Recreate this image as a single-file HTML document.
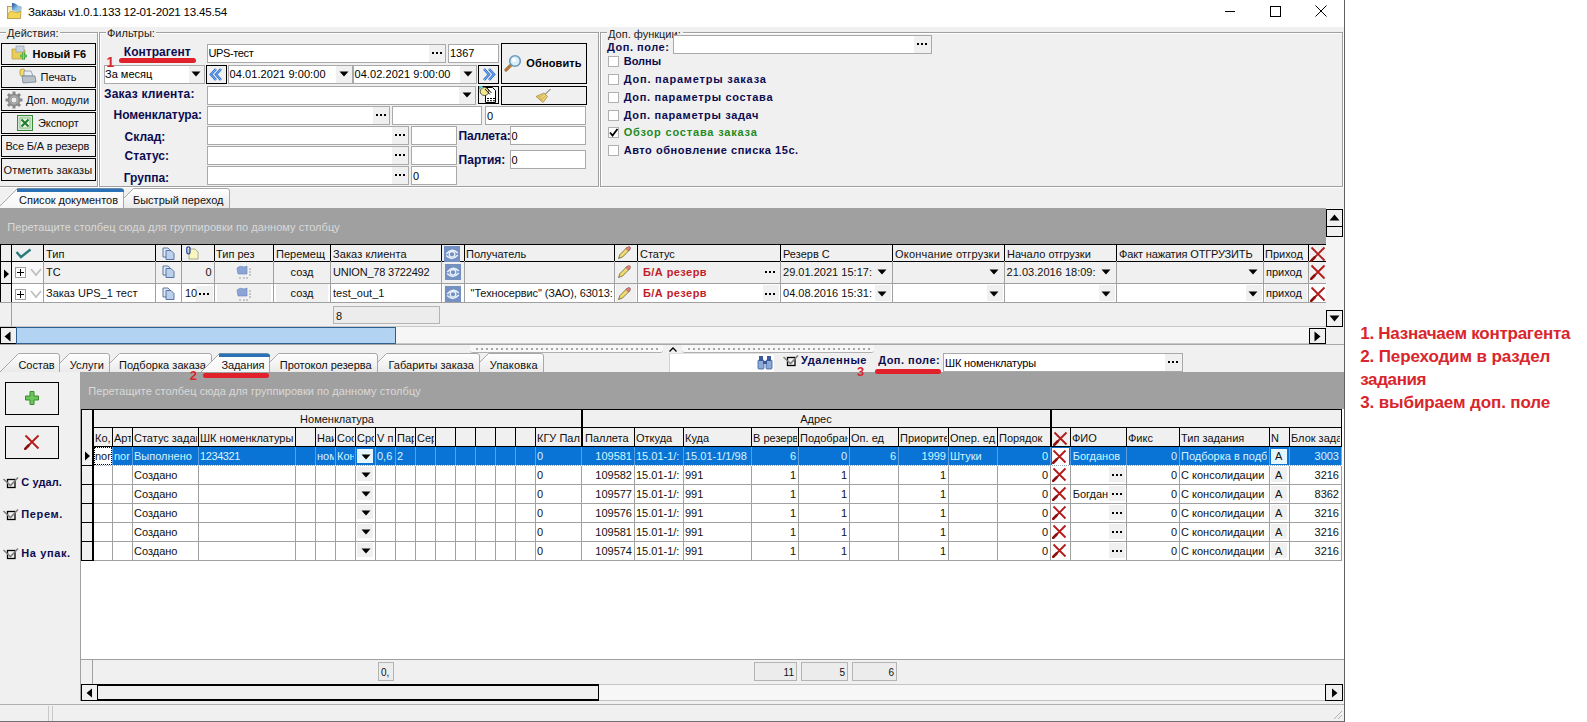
<!DOCTYPE html>
<html><head><meta charset="utf-8"><title>Заказы</title>
<style>html,body{margin:0;padding:0;}body{width:1587px;height:722px;position:relative;overflow:hidden;background:#fff;font-family:"Liberation Sans",sans-serif;}</style>
</head><body>
<div style="position:absolute;left:0px;top:0px;width:1344px;height:27px;background:#fff"></div>
<svg style="position:absolute;left:0px;top:0px;" width="26" height="22" viewBox="0 0 26 22">
      <defs><linearGradient id="ti1" x1="0" y1="0" x2="1" y2="1"><stop offset="0" stop-color="#1f4f8f"/><stop offset="0.5" stop-color="#8ec0f0"/><stop offset="1" stop-color="#c8d8a0"/></linearGradient></defs>
      <rect x="7.5" y="6.5" width="13" height="12" fill="#f8eab8" stroke="#a89050" stroke-width="0.8"/>
      <path d="M12 3 L15 3.5 L18 5.5 L22 7 L21.5 10 L19 13 L12 10 Z" fill="url(#ti1)"/>
      <path d="M7.5 18.5 L8.5 13 Q11 10 14 12 Q18 14 21 11 L20.5 18.5 Z" fill="#f2d655" stroke="#b09040" stroke-width="0.6"/>
    </svg>
<div style="position:absolute;left:28px;top:6px;font:400 11.6px/11.6px 'Liberation Sans', sans-serif;color:#000;white-space:pre;letter-spacing:-0.216px;">Заказы v1.0.1.133 12-01-2021 13.45.54</div>
<div style="position:absolute;left:1225px;top:11px;width:10px;height:1px;background:#000"></div>
<div style="position:absolute;left:1270px;top:6px;width:11px;height:11px;border:1px solid #000;box-sizing:border-box"></div>
<svg style="position:absolute;left:1315px;top:5px;" width="12" height="12" viewBox="0 0 12 12"><path d="M0.5 0.5 L11.5 11.5 M11.5 0.5 L0.5 11.5" stroke="#000" stroke-width="1"/></svg>
<div style="position:absolute;left:0px;top:27px;width:1344px;height:695px;background:#f0f0f0"></div>
<div style="position:absolute;left:1344px;top:0px;width:1px;height:722px;background:#606060"></div>
<div style="position:absolute;left:-1px;top:33px;width:100px;height:155px;border:1px solid #fff;box-sizing:border-box"></div>
<div style="position:absolute;left:-2px;top:32px;width:100px;height:155px;border:1px solid #a0a0a0;box-sizing:border-box"></div>
<div style="position:absolute;left:100px;top:33px;width:500px;height:155px;border:1px solid #fff;box-sizing:border-box"></div>
<div style="position:absolute;left:99px;top:32px;width:500px;height:155px;border:1px solid #a0a0a0;box-sizing:border-box"></div>
<div style="position:absolute;left:601px;top:33px;width:743px;height:155px;border:1px solid #fff;box-sizing:border-box"></div>
<div style="position:absolute;left:600px;top:32px;width:743px;height:155px;border:1px solid #a0a0a0;box-sizing:border-box"></div>
<div style="position:absolute;left:6px;top:28px;width:54px;height:10px;background:#f0f0f0"></div>
<div style="position:absolute;left:7px;top:28px;font:400 11px/11px 'Liberation Sans', sans-serif;color:#222;white-space:pre;letter-spacing:0.037px;">Действия:</div>
<div style="position:absolute;left:106px;top:28px;width:50px;height:10px;background:#f0f0f0"></div>
<div style="position:absolute;left:107px;top:28px;font:400 11px/11px 'Liberation Sans', sans-serif;color:#222;white-space:pre;">Фильтры:</div>
<div style="position:absolute;left:607px;top:28px;width:76px;height:10px;background:#f0f0f0"></div>
<div style="position:absolute;left:608px;top:29px;font:400 11px/11px 'Liberation Sans', sans-serif;color:#222;white-space:pre;">Доп. функции:</div>
<div style="position:absolute;left:1px;top:43px;width:95px;height:22px;border:1px solid #000;box-sizing:border-box;background:#f0f0f0;"></div>
<div style="position:absolute;left:1px;top:66px;width:95px;height:22px;border:1px solid #000;box-sizing:border-box;background:#f0f0f0;"></div>
<div style="position:absolute;left:1px;top:89px;width:95px;height:22px;border:1px solid #000;box-sizing:border-box;background:#f0f0f0;"></div>
<div style="position:absolute;left:1px;top:112px;width:95px;height:22px;border:1px solid #000;box-sizing:border-box;background:#f0f0f0;"></div>
<div style="position:absolute;left:1px;top:135px;width:95px;height:22px;border:1px solid #000;box-sizing:border-box;background:#f0f0f0;"></div>
<div style="position:absolute;left:1px;top:158px;width:95px;height:23px;border:1px solid #000;box-sizing:border-box;background:#f0f0f0;"></div>
<div style="position:absolute;left:32.5px;top:48.5px;font:700 11px/11px 'Liberation Sans', sans-serif;color:#000;white-space:pre;letter-spacing:0.027px;">Новый F6</div>
<div style="position:absolute;left:40.5px;top:71.7px;font:400 11px/11px 'Liberation Sans', sans-serif;color:#111;white-space:pre;letter-spacing:-0.008px;">Печать</div>
<div style="position:absolute;left:26px;top:95px;font:400 11px/11px 'Liberation Sans', sans-serif;color:#111;white-space:pre;letter-spacing:-0.041px;">Доп. модули</div>
<div style="position:absolute;left:38px;top:118px;font:400 11px/11px 'Liberation Sans', sans-serif;color:#111;white-space:pre;letter-spacing:-0.106px;">Экспорт</div>
<div style="position:absolute;left:5.4px;top:141px;font:400 11px/11px 'Liberation Sans', sans-serif;color:#111;white-space:pre;letter-spacing:-0.174px;">Все Б/А в резерв</div>
<div style="position:absolute;left:3.6px;top:164.5px;font:400 11px/11px 'Liberation Sans', sans-serif;color:#111;white-space:pre;letter-spacing:0.108px;">Отметить заказы</div>
<svg style="position:absolute;left:11px;top:45px;" width="17" height="17" viewBox="0 0 17 17">
      <path d="M1 4 L6 4 L7 5 L14 5 L14 14 L1 14 Z" fill="#e9cd5a" stroke="#b39a3a" stroke-width="0.7"/>
      <rect x="5" y="1" width="8" height="6" fill="#c9d4de" stroke="#8a9aaa" stroke-width="0.6"/>
      <path d="M9 11 h7 M12.5 7.5 v7" stroke="#2f9a2f" stroke-width="2.6"/>
      <path d="M9 11 h7 M12.5 7.5 v7" stroke="#7fdc6f" stroke-width="1.2"/>
    </svg>
<svg style="position:absolute;left:19px;top:68px;" width="18" height="17" viewBox="0 0 18 17">
      <rect x="1" y="1" width="5" height="7" rx="2" fill="#f2de6a" stroke="#a08a2a" stroke-width="0.7"/>
      <path d="M5 3 L12 3 L14 8 L5 8 Z" fill="#e8eef4" stroke="#7a8a9a" stroke-width="0.7"/>
      <path d="M3 8 L16 8 L17 14 L4 15 Z" fill="#b8c0c8" stroke="#6a7a8a" stroke-width="0.7"/>
    </svg>
<svg style="position:absolute;left:5px;top:91px;" width="18" height="18" viewBox="0 0 18 18">
      <defs><radialGradient id="gr1"><stop offset="0.4" stop-color="#c8c8c8"/><stop offset="1" stop-color="#7a7a7a"/></radialGradient></defs>
      <rect x="7.5" y="0.5" width="3" height="4" fill="#8a8a8a" transform="rotate(0 9 9)"/><rect x="7.5" y="0.5" width="3" height="4" fill="#8a8a8a" transform="rotate(45 9 9)"/><rect x="7.5" y="0.5" width="3" height="4" fill="#8a8a8a" transform="rotate(90 9 9)"/><rect x="7.5" y="0.5" width="3" height="4" fill="#8a8a8a" transform="rotate(135 9 9)"/><rect x="7.5" y="0.5" width="3" height="4" fill="#8a8a8a" transform="rotate(180 9 9)"/><rect x="7.5" y="0.5" width="3" height="4" fill="#8a8a8a" transform="rotate(225 9 9)"/><rect x="7.5" y="0.5" width="3" height="4" fill="#8a8a8a" transform="rotate(270 9 9)"/><rect x="7.5" y="0.5" width="3" height="4" fill="#8a8a8a" transform="rotate(315 9 9)"/>
      <circle cx="9" cy="9" r="6.3" fill="url(#gr1)"/>
      <circle cx="9" cy="9" r="3" fill="#ececec" stroke="#8a8a8a" stroke-width="0.8"/>
    </svg>
<svg style="position:absolute;left:17px;top:115px;" width="16" height="16" viewBox="0 0 16 16">
      <rect x="0.5" y="0.5" width="15" height="15" fill="#cfe8cf" stroke="#3a8a3a" stroke-width="1"/>
      <rect x="3" y="3" width="10" height="10" fill="#e6f4e6" stroke="#5aa05a" stroke-width="0.6"/>
      <path d="M4.5 4.5 L11.5 11.5 M11.5 4.5 L4.5 11.5" stroke="#1f7a2a" stroke-width="2"/>
    </svg>
<div style="position:absolute;left:123.8px;top:46px;font:700 12px/12px 'Liberation Sans', sans-serif;color:#0c0c50;white-space:pre;letter-spacing:0.041px;">Контрагент</div>
<div style="position:absolute;left:119px;top:58px;width:77px;height:5px;background:#e0202a;border-radius:3px"></div>
<div style="position:absolute;left:106.5px;top:54.5px;font:700 14px/14px 'Liberation Sans', sans-serif;color:#d8282c;white-space:pre;z-index:5;">1</div>
<div style="position:absolute;left:207px;top:44px;width:239px;height:19px;border:1px solid #a9a9a9;box-sizing:border-box;background:#fff"></div>
<div style="position:absolute;left:208.5px;top:48px;font:400 11px/11px 'Liberation Sans', sans-serif;color:#000;white-space:pre;letter-spacing:-0.382px;">UPS-тест</div>
<div style="position:absolute;left:429px;top:45px;width:16px;height:17px;background:#f0f0f0"></div>
<div style="position:absolute;left:432px;top:52px;width:2px;height:2px;background:#000"></div>
<div style="position:absolute;left:436px;top:52px;width:2px;height:2px;background:#000"></div>
<div style="position:absolute;left:440px;top:52px;width:2px;height:2px;background:#000"></div>
<div style="position:absolute;left:448px;top:44px;width:51px;height:19px;border:1px solid #a9a9a9;box-sizing:border-box;background:#fff"></div>
<div style="position:absolute;left:450px;top:48px;font:400 11px/11px 'Liberation Sans', sans-serif;color:#000;white-space:pre;">1367</div>
<div style="position:absolute;left:104px;top:65px;width:101px;height:19px;border:1px solid #a9a9a9;box-sizing:border-box;background:#fff"></div>
<div style="position:absolute;left:105px;top:69px;font:400 11px/11px 'Liberation Sans', sans-serif;color:#000;white-space:pre;">За месяц</div>
<div style="position:absolute;left:189px;top:66px;width:15px;height:17px;background:#f0f0f0"></div>
<svg style="position:absolute;left:191px;top:71px;" width="10" height="6" viewBox="0 0 10 6"><path d="M0.5 0.5 L9.5 0.5 L5 5.5 Z" fill="#000"/></svg>
<div style="position:absolute;left:206px;top:65px;width:21px;height:19px;border:1px solid #000;box-sizing:border-box;background:#f0f0f0;"></div>
<svg style="position:absolute;left:209px;top:67px;" width="15" height="15" viewBox="0 0 15 15"><path d="M7 2 L2 7.5 L7 13 M12 2 L7 7.5 L12 13" fill="none" stroke="#2d6fd0" stroke-width="2.6"/><path d="M7 2 L2 7.5 L7 13 M12 2 L7 7.5 L12 13" fill="none" stroke="#8ec0f8" stroke-width="0.9"/></svg>
<div style="position:absolute;left:228px;top:65px;width:125px;height:19px;border:1px solid #a9a9a9;box-sizing:border-box;background:#fff"></div>
<div style="position:absolute;left:229.6px;top:69px;font:400 11px/11px 'Liberation Sans', sans-serif;color:#000;white-space:pre;letter-spacing:0.066px;">04.01.2021 9:00:00</div>
<div style="position:absolute;left:336px;top:66px;width:16px;height:17px;background:#f0f0f0"></div>
<svg style="position:absolute;left:339px;top:71px;" width="10" height="6" viewBox="0 0 10 6"><path d="M0.5 0.5 L9.5 0.5 L5 5.5 Z" fill="#000"/></svg>
<div style="position:absolute;left:353px;top:65px;width:124px;height:19px;border:1px solid #a9a9a9;box-sizing:border-box;background:#fff"></div>
<div style="position:absolute;left:354.5px;top:69px;font:400 11px/11px 'Liberation Sans', sans-serif;color:#000;white-space:pre;letter-spacing:0.066px;">04.02.2021 9:00:00</div>
<div style="position:absolute;left:460px;top:66px;width:16px;height:17px;background:#f0f0f0"></div>
<svg style="position:absolute;left:463px;top:71px;" width="10" height="6" viewBox="0 0 10 6"><path d="M0.5 0.5 L9.5 0.5 L5 5.5 Z" fill="#000"/></svg>
<div style="position:absolute;left:478px;top:65px;width:21px;height:19px;border:1px solid #000;box-sizing:border-box;background:#f0f0f0;"></div>
<svg style="position:absolute;left:481px;top:67px;" width="15" height="15" viewBox="0 0 15 15"><path d="M3 2 L8 7.5 L3 13 M8 2 L13 7.5 L8 13" fill="none" stroke="#2d6fd0" stroke-width="2.6"/><path d="M3 2 L8 7.5 L3 13 M8 2 L13 7.5 L8 13" fill="none" stroke="#8ec0f8" stroke-width="0.9"/></svg>
<div style="position:absolute;left:501px;top:43px;width:86px;height:41px;border:1px solid #000;box-sizing:border-box;background:#f0f0f0;"></div>
<svg style="position:absolute;left:503px;top:54px;" width="20" height="19" viewBox="0 0 20 19">
      <path d="M3 16 L8 11" stroke="#b07840" stroke-width="3.2" stroke-linecap="round"/>
      <circle cx="12" cy="7" r="5.3" fill="#d8eef8" stroke="#6a9ab8" stroke-width="1.6"/>
      <circle cx="11" cy="6" r="2" fill="#fff"/>
    </svg>
<div style="position:absolute;left:526.3px;top:58px;font:700 11px/11px 'Liberation Sans', sans-serif;color:#000;white-space:pre;letter-spacing:0.126px;">Обновить</div>
<div style="position:absolute;left:104px;top:88px;font:700 12px/12px 'Liberation Sans', sans-serif;color:#0c0c50;white-space:pre;letter-spacing:0.190px;">Заказ клиента:</div>
<div style="position:absolute;left:207px;top:86px;width:269px;height:19px;border:1px solid #a9a9a9;box-sizing:border-box;background:#fff"></div>
<div style="position:absolute;left:459px;top:87px;width:16px;height:17px;background:#f0f0f0"></div>
<svg style="position:absolute;left:462px;top:92px;" width="10" height="6" viewBox="0 0 10 6"><path d="M0.5 0.5 L9.5 0.5 L5 5.5 Z" fill="#000"/></svg>
<div style="position:absolute;left:478px;top:86px;width:21px;height:18px;border:1px solid #000;box-sizing:border-box;background:#f0f0f0;"></div>
<svg style="position:absolute;left:478px;top:85px;" width="21" height="19" viewBox="0 0 21 19">
      <path d="M1 1 L5 1 L1 5 Z" fill="#40c8c8"/>
      <path d="M7.5 2.5 L14.5 2.5 L17.5 5.5 L17.5 17.5 L7.5 17.5 Z" fill="#fff" stroke="#000" stroke-width="1"/>
      <path d="M9 13.5 h8 M9 15.8 h8" stroke="#000" stroke-width="1.1" stroke-dasharray="2 1"/>
      <ellipse cx="6.5" cy="6.5" rx="4.3" ry="4" fill="#f4e88a" stroke="#333" stroke-width="0.8"/>
      <path d="M7 4 L12 9.5 M9 3 L13.5 8" stroke="#000" stroke-width="0.9"/>
    </svg>
<div style="position:absolute;left:501px;top:86px;width:86px;height:19px;border:1px solid #000;box-sizing:border-box;background:#f0f0f0;"></div>
<svg style="position:absolute;left:535px;top:88px;" width="17" height="16" viewBox="0 0 17 16">
      <path d="M15.5 1 L10 6.5" stroke="#5a5a5a" stroke-width="1"/>
      <path d="M9 5 L12.5 8.5 L8 14.5 L1 8.5 Z" fill="#ecd27a" stroke="#a08030" stroke-width="0.7"/>
      <path d="M4 9.5 L8.5 6.5 M6 11.5 L10.5 8 M3 8 L7.5 13" stroke="#b89a40" stroke-width="0.6"/>
    </svg>
<div style="position:absolute;left:113.6px;top:109px;font:700 12px/12px 'Liberation Sans', sans-serif;color:#0c0c50;white-space:pre;letter-spacing:-0.106px;">Номенклатура:</div>
<div style="position:absolute;left:207px;top:106px;width:183px;height:19px;border:1px solid #a9a9a9;box-sizing:border-box;background:#fff"></div>
<div style="position:absolute;left:373px;top:107px;width:16px;height:17px;background:#f0f0f0"></div>
<div style="position:absolute;left:376px;top:114px;width:2px;height:2px;background:#000"></div>
<div style="position:absolute;left:380px;top:114px;width:2px;height:2px;background:#000"></div>
<div style="position:absolute;left:384px;top:114px;width:2px;height:2px;background:#000"></div>
<div style="position:absolute;left:392px;top:106px;width:90px;height:19px;border:1px solid #a9a9a9;box-sizing:border-box;background:#fff"></div>
<div style="position:absolute;left:485px;top:106px;width:101px;height:19px;border:1px solid #a9a9a9;box-sizing:border-box;background:#fff"></div>
<div style="position:absolute;left:487px;top:110.5px;font:400 11px/11px 'Liberation Sans', sans-serif;color:#000;white-space:pre;">0</div>
<div style="position:absolute;left:124.6px;top:131px;font:700 12px/12px 'Liberation Sans', sans-serif;color:#0c0c50;white-space:pre;">Склад:</div>
<div style="position:absolute;left:207px;top:126px;width:202px;height:19px;border:1px solid #a9a9a9;box-sizing:border-box;background:#fff"></div>
<div style="position:absolute;left:392px;top:127px;width:16px;height:17px;background:#f0f0f0"></div>
<div style="position:absolute;left:395px;top:134px;width:2px;height:2px;background:#000"></div>
<div style="position:absolute;left:399px;top:134px;width:2px;height:2px;background:#000"></div>
<div style="position:absolute;left:403px;top:134px;width:2px;height:2px;background:#000"></div>
<div style="position:absolute;left:411px;top:126px;width:46px;height:19px;border:1px solid #a9a9a9;box-sizing:border-box;background:#fff"></div>
<div style="position:absolute;left:124.6px;top:150px;font:700 12px/12px 'Liberation Sans', sans-serif;color:#0c0c50;white-space:pre;">Статус:</div>
<div style="position:absolute;left:207px;top:146px;width:202px;height:19px;border:1px solid #a9a9a9;box-sizing:border-box;background:#fff"></div>
<div style="position:absolute;left:392px;top:147px;width:16px;height:17px;background:#f0f0f0"></div>
<div style="position:absolute;left:395px;top:154px;width:2px;height:2px;background:#000"></div>
<div style="position:absolute;left:399px;top:154px;width:2px;height:2px;background:#000"></div>
<div style="position:absolute;left:403px;top:154px;width:2px;height:2px;background:#000"></div>
<div style="position:absolute;left:411px;top:146px;width:46px;height:19px;border:1px solid #a9a9a9;box-sizing:border-box;background:#fff"></div>
<div style="position:absolute;left:123.7px;top:172px;font:700 12px/12px 'Liberation Sans', sans-serif;color:#0c0c50;white-space:pre;">Группа:</div>
<div style="position:absolute;left:207px;top:166px;width:202px;height:19px;border:1px solid #a9a9a9;box-sizing:border-box;background:#fff"></div>
<div style="position:absolute;left:392px;top:167px;width:16px;height:17px;background:#f0f0f0"></div>
<div style="position:absolute;left:395px;top:174px;width:2px;height:2px;background:#000"></div>
<div style="position:absolute;left:399px;top:174px;width:2px;height:2px;background:#000"></div>
<div style="position:absolute;left:403px;top:174px;width:2px;height:2px;background:#000"></div>
<div style="position:absolute;left:411px;top:166px;width:46px;height:19px;border:1px solid #a9a9a9;box-sizing:border-box;background:#fff"></div>
<div style="position:absolute;left:413px;top:171px;font:400 11px/11px 'Liberation Sans', sans-serif;color:#000;white-space:pre;">0</div>
<div style="position:absolute;left:458.6px;top:130px;font:700 12px/12px 'Liberation Sans', sans-serif;color:#0c0c50;white-space:pre;letter-spacing:-0.182px;">Паллета:</div>
<div style="position:absolute;left:510px;top:126px;width:76px;height:19px;border:1px solid #a9a9a9;box-sizing:border-box;background:#fff"></div>
<div style="position:absolute;left:511.5px;top:131px;font:400 11px/11px 'Liberation Sans', sans-serif;color:#000;white-space:pre;">0</div>
<div style="position:absolute;left:458.6px;top:153.6px;font:700 12px/12px 'Liberation Sans', sans-serif;color:#0c0c50;white-space:pre;">Партия:</div>
<div style="position:absolute;left:510px;top:150px;width:76px;height:19px;border:1px solid #a9a9a9;box-sizing:border-box;background:#fff"></div>
<div style="position:absolute;left:511.5px;top:155px;font:400 11px/11px 'Liberation Sans', sans-serif;color:#000;white-space:pre;">0</div>
<div style="position:absolute;left:607px;top:41.8px;font:700 11px/11px 'Liberation Sans', sans-serif;color:#0c0c50;white-space:pre;letter-spacing:0.523px;">Доп. поле:</div>
<div style="position:absolute;left:673px;top:35px;width:259px;height:19px;border:1px solid #a9a9a9;box-sizing:border-box;background:#fff"></div>
<div style="position:absolute;left:914px;top:36px;width:17px;height:17px;background:#f0f0f0"></div>
<div style="position:absolute;left:917px;top:43px;width:2px;height:2px;background:#000"></div>
<div style="position:absolute;left:921px;top:43px;width:2px;height:2px;background:#000"></div>
<div style="position:absolute;left:925px;top:43px;width:2px;height:2px;background:#000"></div>
<div style="position:absolute;left:608px;top:56px;width:11px;height:11px;border:1px solid #b0b0b0;box-sizing:border-box;background:#fff"></div>
<div style="position:absolute;left:623.7px;top:55.7px;font:700 11px/11px 'Liberation Sans', sans-serif;color:#0c0c50;white-space:pre;letter-spacing:0.016px;">Волны</div>
<div style="position:absolute;left:608px;top:74px;width:11px;height:11px;border:1px solid #b0b0b0;box-sizing:border-box;background:#fff"></div>
<div style="position:absolute;left:623.7px;top:73.5px;font:700 11px/11px 'Liberation Sans', sans-serif;color:#0c0c50;white-space:pre;letter-spacing:0.792px;">Доп. параметры заказа</div>
<div style="position:absolute;left:608px;top:92px;width:11px;height:11px;border:1px solid #b0b0b0;box-sizing:border-box;background:#fff"></div>
<div style="position:absolute;left:623.7px;top:91.5px;font:700 11px/11px 'Liberation Sans', sans-serif;color:#0c0c50;white-space:pre;letter-spacing:0.670px;">Доп. параметры состава</div>
<div style="position:absolute;left:608px;top:110px;width:11px;height:11px;border:1px solid #b0b0b0;box-sizing:border-box;background:#fff"></div>
<div style="position:absolute;left:623.7px;top:109.5px;font:700 11px/11px 'Liberation Sans', sans-serif;color:#0c0c50;white-space:pre;letter-spacing:0.651px;">Доп. параметры задач</div>
<div style="position:absolute;left:608px;top:127px;width:11px;height:11px;border:1px solid #b0b0b0;box-sizing:border-box;background:#fff"></div>
<svg style="position:absolute;left:608px;top:127px;" width="11" height="11" viewBox="0 0 11 11"><path d="M2 5.5 L4.5 8.5 L9.5 2" fill="none" stroke="#000" stroke-width="1.8"/></svg>
<div style="position:absolute;left:623.7px;top:127px;font:700 11px/11px 'Liberation Sans', sans-serif;color:#1f8a1f;white-space:pre;letter-spacing:0.818px;">Обзор состава заказа</div>
<div style="position:absolute;left:608px;top:145px;width:11px;height:11px;border:1px solid #b0b0b0;box-sizing:border-box;background:#fff"></div>
<div style="position:absolute;left:623.7px;top:145px;font:700 11px/11px 'Liberation Sans', sans-serif;color:#0c0c50;white-space:pre;letter-spacing:0.543px;">Авто обновление списка 15с.</div>
<svg style="position:absolute;left:113px;top:188px;" width="117" height="21" viewBox="0 0 117 21"><defs>
      <linearGradient id="tgI133" x1="0" y1="0" x2="0" y2="1"><stop offset="0" stop-color="#ffffff"/><stop offset="1" stop-color="#e9e9e9"/></linearGradient></defs>
      <path d="M0.5 20.5 L20.5 0.5 L114 0.5 Q116.5 0.5 116.5 3 L116.5 20.5 Z" fill="url(#tgI133)" stroke="none"/>
      <path d="M0.5 20.5 L20.5 0.5 L114 0.5 Q116.5 0.5 116.5 3 L116.5 20.5" fill="none" stroke="#a8a8a8" stroke-width="1"/></svg>
<div style="position:absolute;left:133px;top:195px;font:400 11px/11px 'Liberation Sans', sans-serif;color:#111;white-space:pre;letter-spacing:-0.009px;">Быстрый переход</div>
<svg style="position:absolute;left:-3px;top:188px;" width="127" height="21" viewBox="0 0 127 21"><defs>
      <linearGradient id="tgA17" x1="0" y1="0" x2="0" y2="1"><stop offset="0" stop-color="#ffffff"/><stop offset="1" stop-color="#f6f6f6"/></linearGradient></defs>
      <path d="M0.5 20.5 L20.5 0.5 L124 0.5 Q126.5 0.5 126.5 3 L126.5 20.5 Z" fill="url(#tgA17)" stroke="none"/>
      <path d="M0.5 20.5 L20.5 0.5 L124 0.5 Q126.5 0.5 126.5 3 L126.5 20.5" fill="none" stroke="#a8a8a8" stroke-width="1"/></svg>
<svg style="position:absolute;left:17px;top:188px;" width="107" height="4" viewBox="0 0 107 4"><path d="M0 4 L0 0.5 L104 0.5 Q107 0.5 107 3 L107 4 Z" fill="#2a72b5"/></svg>
<div style="position:absolute;left:19px;top:195px;font:400 11px/11px 'Liberation Sans', sans-serif;color:#111;white-space:pre;letter-spacing:-0.008px;">Список документов</div>
<div style="position:absolute;left:0px;top:208px;width:1326px;height:37px;background:#a0a0a0"></div>
<div style="position:absolute;left:7.3px;top:221.7px;font:400 11px/11px 'Liberation Sans', sans-serif;color:#d9d9d9;white-space:pre;letter-spacing:0.040px;">Перетащите столбец сюда для группировки по данному столбцу</div>
<div style="position:absolute;left:0px;top:244px;width:1326px;height:17px;background:#f0f0f0"></div>
<div style="position:absolute;left:0px;top:261px;width:1326px;height:22px;background:#f0f0f0"></div>
<div style="position:absolute;left:12px;top:283px;width:1314px;height:19px;background:#fff"></div>
<div style="position:absolute;left:0px;top:283px;width:11px;height:19px;background:#f0f0f0"></div>
<div style="position:absolute;left:12px;top:262px;width:31px;height:21px;background:#f8f8f8"></div>
<div style="position:absolute;left:196px;top:286px;width:17px;height:16px;background:#f0f0f0"></div>
<div style="position:absolute;left:217px;top:284px;width:54px;height:18px;background:#f0f0f0"></div>
<div style="position:absolute;left:276px;top:284px;width:52px;height:18px;background:#f0f0f0"></div>
<div style="position:absolute;left:444px;top:284px;width:17px;height:18px;background:#f0f0f0"></div>
<div style="position:absolute;left:616px;top:284px;width:20px;height:18px;background:#f0f0f0"></div>
<div style="position:absolute;left:763px;top:285px;width:16px;height:16px;background:#f0f0f0"></div>
<div style="position:absolute;left:875px;top:285px;width:16px;height:16px;background:#f0f0f0"></div>
<div style="position:absolute;left:987px;top:285px;width:16px;height:16px;background:#f0f0f0"></div>
<div style="position:absolute;left:1099px;top:285px;width:16px;height:16px;background:#f0f0f0"></div>
<div style="position:absolute;left:1246px;top:285px;width:16px;height:16px;background:#f0f0f0"></div>
<div style="position:absolute;left:1265px;top:284px;width:42px;height:18px;background:#f0f0f0"></div>
<div style="position:absolute;left:0px;top:244px;width:1326px;height:1px;background:#000"></div>
<div style="position:absolute;left:0px;top:261px;width:1326px;height:1px;background:#000"></div>
<div style="position:absolute;left:0px;top:244px;width:1px;height:17px;background:#000"></div>
<div style="position:absolute;left:11px;top:244px;width:1px;height:17px;background:#000"></div>
<div style="position:absolute;left:43px;top:244px;width:1px;height:17px;background:#000"></div>
<div style="position:absolute;left:155px;top:244px;width:1px;height:17px;background:#000"></div>
<div style="position:absolute;left:181px;top:244px;width:1px;height:17px;background:#000"></div>
<div style="position:absolute;left:214px;top:244px;width:1px;height:17px;background:#000"></div>
<div style="position:absolute;left:273px;top:244px;width:1px;height:17px;background:#000"></div>
<div style="position:absolute;left:330px;top:244px;width:1px;height:17px;background:#000"></div>
<div style="position:absolute;left:441px;top:244px;width:1px;height:17px;background:#000"></div>
<div style="position:absolute;left:464px;top:244px;width:1px;height:17px;background:#000"></div>
<div style="position:absolute;left:614px;top:244px;width:1px;height:17px;background:#000"></div>
<div style="position:absolute;left:637px;top:244px;width:1px;height:17px;background:#000"></div>
<div style="position:absolute;left:780px;top:244px;width:1px;height:17px;background:#000"></div>
<div style="position:absolute;left:892px;top:244px;width:1px;height:17px;background:#000"></div>
<div style="position:absolute;left:1004px;top:244px;width:1px;height:17px;background:#000"></div>
<div style="position:absolute;left:1116px;top:244px;width:1px;height:17px;background:#000"></div>
<div style="position:absolute;left:1263px;top:244px;width:1px;height:17px;background:#000"></div>
<div style="position:absolute;left:1308px;top:244px;width:1px;height:17px;background:#000"></div>
<div style="position:absolute;left:12px;top:283px;width:1314px;height:1px;background:#a0a0a0"></div>
<div style="position:absolute;left:12px;top:302px;width:1314px;height:1px;background:#a0a0a0"></div>
<div style="position:absolute;left:0px;top:283px;width:12px;height:1px;background:#000"></div>
<div style="position:absolute;left:0px;top:302px;width:12px;height:1px;background:#a0a0a0"></div>
<div style="position:absolute;left:43px;top:261px;width:1px;height:42px;background:#a0a0a0"></div>
<div style="position:absolute;left:155px;top:261px;width:1px;height:42px;background:#a0a0a0"></div>
<div style="position:absolute;left:181px;top:261px;width:1px;height:42px;background:#a0a0a0"></div>
<div style="position:absolute;left:214px;top:261px;width:1px;height:42px;background:#a0a0a0"></div>
<div style="position:absolute;left:273px;top:261px;width:1px;height:42px;background:#a0a0a0"></div>
<div style="position:absolute;left:330px;top:261px;width:1px;height:42px;background:#a0a0a0"></div>
<div style="position:absolute;left:441px;top:261px;width:1px;height:42px;background:#a0a0a0"></div>
<div style="position:absolute;left:464px;top:261px;width:1px;height:42px;background:#a0a0a0"></div>
<div style="position:absolute;left:614px;top:261px;width:1px;height:42px;background:#a0a0a0"></div>
<div style="position:absolute;left:637px;top:261px;width:1px;height:42px;background:#a0a0a0"></div>
<div style="position:absolute;left:780px;top:261px;width:1px;height:42px;background:#a0a0a0"></div>
<div style="position:absolute;left:892px;top:261px;width:1px;height:42px;background:#a0a0a0"></div>
<div style="position:absolute;left:1004px;top:261px;width:1px;height:42px;background:#a0a0a0"></div>
<div style="position:absolute;left:1116px;top:261px;width:1px;height:42px;background:#a0a0a0"></div>
<div style="position:absolute;left:1263px;top:261px;width:1px;height:42px;background:#a0a0a0"></div>
<div style="position:absolute;left:1308px;top:261px;width:1px;height:42px;background:#a0a0a0"></div>
<div style="position:absolute;left:0px;top:261px;width:1px;height:41px;background:#000"></div>
<div style="position:absolute;left:11px;top:261px;width:1px;height:41px;background:#000"></div>
<svg style="position:absolute;left:15px;top:248px;" width="17" height="11" viewBox="0 0 17 11"><path d="M1.5 4 L6 9 L15.5 1.5" fill="none" stroke="#2a7a7a" stroke-width="2.4"/></svg>
<div style="position:absolute;left:46px;top:249px;font:400 11px/11px 'Liberation Sans', sans-serif;color:#111;white-space:pre;">Тип</div>
<svg style="position:absolute;left:162px;top:247px;" width="13" height="13" viewBox="0 0 13 13">
      <path d="M1 1 L6 1 L8 3 L8 10 L1 10 Z" fill="#dfe8f4" stroke="#4a6a9a" stroke-width="0.9"/>
      <path d="M4 3.5 L9 3.5 L12 6.5 L12 12.5 L4 12.5 Z" fill="#bcd0ec" stroke="#4a6a9a" stroke-width="0.9"/></svg>
<svg style="position:absolute;left:186px;top:246px;" width="13" height="14" viewBox="0 0 13 14">
      <path d="M3 3 L9 3 L12 6 L12 13 L3 13 Z" fill="#fbf6c0" stroke="#9a9a7a" stroke-width="0.8"/>
      <rect x="0.8" y="0.8" width="3.2" height="7" rx="1.6" fill="none" stroke="#2a4aa0" stroke-width="1.3"/></svg>
<div style="position:absolute;left:216px;top:249px;font:400 11px/11px 'Liberation Sans', sans-serif;color:#111;white-space:pre;">Тип рез</div>
<div style="position:absolute;left:276px;top:249px;font:400 11px/11px 'Liberation Sans', sans-serif;color:#111;white-space:pre;">Перемещ</div>
<div style="position:absolute;left:333px;top:249px;font:400 11px/11px 'Liberation Sans', sans-serif;color:#111;white-space:pre;letter-spacing:0.081px;">Заказ клиента</div>
<svg style="position:absolute;left:444px;top:246px;" width="16" height="16" viewBox="0 0 16 16">
      <rect x="0" y="0" width="16" height="16" fill="#7491c2"/>
      <path d="M2.2 8 Q8 1 13.8 7" fill="none" stroke="#eaf2fc" stroke-width="1.5"/>
      <path d="M13.8 9 Q8 15.5 2.2 9.5" fill="none" stroke="#eaf2fc" stroke-width="1.5"/>
      <circle cx="8" cy="8.3" r="2.8" fill="none" stroke="#eaf2fc" stroke-width="1.3"/></svg>
<div style="position:absolute;left:466px;top:249px;font:400 11px/11px 'Liberation Sans', sans-serif;color:#111;white-space:pre;">Получатель</div>
<svg style="position:absolute;left:617px;top:246px;" width="14" height="14" viewBox="0 0 14 14">
      <path d="M1.5 12.5 L3 8.5 L10 1.5 L12.5 4 L5.5 11 Z" fill="#f0dc70" stroke="#6a5a2a" stroke-width="0.8"/>
      <path d="M9 2.5 L10.5 1 Q12 0 13 1 Q14 2 13 3.5 L11.5 5 Z" fill="#e08080" stroke="#8a4040" stroke-width="0.6"/></svg>
<div style="position:absolute;left:640px;top:249px;font:400 11px/11px 'Liberation Sans', sans-serif;color:#111;white-space:pre;">Статус</div>
<div style="position:absolute;left:783px;top:249px;font:400 11px/11px 'Liberation Sans', sans-serif;color:#111;white-space:pre;">Резерв С</div>
<div style="position:absolute;left:895px;top:249px;font:400 11px/11px 'Liberation Sans', sans-serif;color:#111;white-space:pre;letter-spacing:0.202px;">Окончание отгрузки</div>
<div style="position:absolute;left:1007px;top:249px;font:400 11px/11px 'Liberation Sans', sans-serif;color:#111;white-space:pre;">Начало отгрузки</div>
<div style="position:absolute;left:1119px;top:249px;font:400 11px/11px 'Liberation Sans', sans-serif;color:#111;white-space:pre;letter-spacing:-0.146px;">Факт нажатия ОТГРУЗИТЬ</div>
<div style="position:absolute;left:1265px;top:249px;font:400 11px/11px 'Liberation Sans', sans-serif;color:#111;white-space:pre;">Приход</div>
<svg style="position:absolute;left:1310px;top:246px;" width="16" height="16" viewBox="0 0 16 16"><path d="M1.5 1.5 L14.5 14.5 M14.5 1.5 L1.5 14.5" stroke="#b41a1a" stroke-width="1.8"/><path d="M1.2 14.8 L4.5 11.5" stroke="#8a1010" stroke-width="2.6" stroke-linecap="round"/></svg>
<svg style="position:absolute;left:3px;top:269px;" width="7" height="10" viewBox="0 0 7 10"><path d="M1 0.5 L6 5 L1 9.5 Z" fill="#000"/></svg>
<div style="position:absolute;left:15px;top:267px;width:11px;height:11px;border:1px solid #a0a0a0;box-sizing:border-box;background:#fff"></div>
<div style="position:absolute;left:17px;top:272px;width:7px;height:1px;background:#000"></div>
<div style="position:absolute;left:20px;top:269px;width:1px;height:7px;background:#000"></div>
<svg style="position:absolute;left:30px;top:268px;" width="12" height="9" viewBox="0 0 12 9"><path d="M1 1 L6 7 L11 1" fill="none" stroke="#c0c0c0" stroke-width="1.8"/></svg>
<svg style="position:absolute;left:162px;top:265px;" width="13" height="13" viewBox="0 0 13 13">
      <path d="M1 1 L6 1 L8 3 L8 10 L1 10 Z" fill="#dfe8f4" stroke="#4a6a9a" stroke-width="0.9"/>
      <path d="M4 3.5 L9 3.5 L12 6.5 L12 12.5 L4 12.5 Z" fill="#bcd0ec" stroke="#4a6a9a" stroke-width="0.9"/></svg>
<svg style="position:absolute;left:236px;top:265px;" width="16" height="14" viewBox="0 0 16 14">
      <path d="M1 3 Q4 0 8 2 L11 1 L11 9 L2 9 Z" fill="#8aa4d6" stroke="#6a84b6" stroke-width="0.6"/>
      <path d="M13 4 h2 M13 7 h2 M13 10 h2 M3 13 h2 M7 13 h2 M10 13 h2" stroke="#9a9a9a" stroke-width="1.2"/></svg>
<div style="position:absolute;left:302px;transform:translateX(-50%);top:267px;font:400 11px/11px 'Liberation Sans', sans-serif;color:#111;white-space:pre;">созд</div>
<svg style="position:absolute;left:445px;top:264px;" width="16" height="16" viewBox="0 0 16 16">
      <rect x="0" y="0" width="16" height="16" fill="#7491c2"/>
      <path d="M2.2 8 Q8 1 13.8 7" fill="none" stroke="#eaf2fc" stroke-width="1.5"/>
      <path d="M13.8 9 Q8 15.5 2.2 9.5" fill="none" stroke="#eaf2fc" stroke-width="1.5"/>
      <circle cx="8" cy="8.3" r="2.8" fill="none" stroke="#eaf2fc" stroke-width="1.3"/></svg>
<svg style="position:absolute;left:617px;top:265px;" width="14" height="14" viewBox="0 0 14 14">
      <path d="M1.5 12.5 L3 8.5 L10 1.5 L12.5 4 L5.5 11 Z" fill="#f0dc70" stroke="#6a5a2a" stroke-width="0.8"/>
      <path d="M9 2.5 L10.5 1 Q12 0 13 1 Q14 2 13 3.5 L11.5 5 Z" fill="#e08080" stroke="#8a4040" stroke-width="0.6"/></svg>
<div style="position:absolute;left:643px;top:267px;font:700 11px/11px 'Liberation Sans', sans-serif;color:#bf1e2a;white-space:pre;letter-spacing:0.427px;">Б/А резерв</div>
<div style="position:absolute;left:765px;top:271px;width:2px;height:2px;background:#000"></div>
<div style="position:absolute;left:769px;top:271px;width:2px;height:2px;background:#000"></div>
<div style="position:absolute;left:773px;top:271px;width:2px;height:2px;background:#000"></div>
<svg style="position:absolute;left:877px;top:269px;" width="10" height="6" viewBox="0 0 10 6"><path d="M0.5 0.5 L9.5 0.5 L5 5.5 Z" fill="#000"/></svg>
<svg style="position:absolute;left:989px;top:269px;" width="10" height="6" viewBox="0 0 10 6"><path d="M0.5 0.5 L9.5 0.5 L5 5.5 Z" fill="#000"/></svg>
<svg style="position:absolute;left:1101px;top:269px;" width="10" height="6" viewBox="0 0 10 6"><path d="M0.5 0.5 L9.5 0.5 L5 5.5 Z" fill="#000"/></svg>
<svg style="position:absolute;left:1248px;top:269px;" width="10" height="6" viewBox="0 0 10 6"><path d="M0.5 0.5 L9.5 0.5 L5 5.5 Z" fill="#000"/></svg>
<div style="position:absolute;left:1266px;top:267px;font:400 11px/11px 'Liberation Sans', sans-serif;color:#111;white-space:pre;">приход</div>
<svg style="position:absolute;left:1310px;top:264px;" width="16" height="16" viewBox="0 0 16 16"><path d="M1.5 1.5 L14.5 14.5 M14.5 1.5 L1.5 14.5" stroke="#b41a1a" stroke-width="1.8"/><path d="M1.2 14.8 L4.5 11.5" stroke="#8a1010" stroke-width="2.6" stroke-linecap="round"/></svg>
<div style="position:absolute;left:15px;top:289px;width:11px;height:11px;border:1px solid #a0a0a0;box-sizing:border-box;background:#fff"></div>
<div style="position:absolute;left:17px;top:294px;width:7px;height:1px;background:#000"></div>
<div style="position:absolute;left:20px;top:291px;width:1px;height:7px;background:#000"></div>
<svg style="position:absolute;left:30px;top:290px;" width="12" height="9" viewBox="0 0 12 9"><path d="M1 1 L6 7 L11 1" fill="none" stroke="#c0c0c0" stroke-width="1.8"/></svg>
<svg style="position:absolute;left:162px;top:287px;" width="13" height="13" viewBox="0 0 13 13">
      <path d="M1 1 L6 1 L8 3 L8 10 L1 10 Z" fill="#dfe8f4" stroke="#4a6a9a" stroke-width="0.9"/>
      <path d="M4 3.5 L9 3.5 L12 6.5 L12 12.5 L4 12.5 Z" fill="#bcd0ec" stroke="#4a6a9a" stroke-width="0.9"/></svg>
<svg style="position:absolute;left:236px;top:287px;" width="16" height="14" viewBox="0 0 16 14">
      <path d="M1 3 Q4 0 8 2 L11 1 L11 9 L2 9 Z" fill="#8aa4d6" stroke="#6a84b6" stroke-width="0.6"/>
      <path d="M13 4 h2 M13 7 h2 M13 10 h2 M3 13 h2 M7 13 h2 M10 13 h2" stroke="#9a9a9a" stroke-width="1.2"/></svg>
<div style="position:absolute;left:302px;transform:translateX(-50%);top:288px;font:400 11px/11px 'Liberation Sans', sans-serif;color:#111;white-space:pre;">созд</div>
<svg style="position:absolute;left:445px;top:286px;" width="16" height="16" viewBox="0 0 16 16">
      <rect x="0" y="0" width="16" height="16" fill="#7491c2"/>
      <path d="M2.2 8 Q8 1 13.8 7" fill="none" stroke="#eaf2fc" stroke-width="1.5"/>
      <path d="M13.8 9 Q8 15.5 2.2 9.5" fill="none" stroke="#eaf2fc" stroke-width="1.5"/>
      <circle cx="8" cy="8.3" r="2.8" fill="none" stroke="#eaf2fc" stroke-width="1.3"/></svg>
<svg style="position:absolute;left:617px;top:287px;" width="14" height="14" viewBox="0 0 14 14">
      <path d="M1.5 12.5 L3 8.5 L10 1.5 L12.5 4 L5.5 11 Z" fill="#f0dc70" stroke="#6a5a2a" stroke-width="0.8"/>
      <path d="M9 2.5 L10.5 1 Q12 0 13 1 Q14 2 13 3.5 L11.5 5 Z" fill="#e08080" stroke="#8a4040" stroke-width="0.6"/></svg>
<div style="position:absolute;left:643px;top:288px;font:700 11px/11px 'Liberation Sans', sans-serif;color:#bf1e2a;white-space:pre;letter-spacing:0.427px;">Б/А резерв</div>
<div style="position:absolute;left:765px;top:293px;width:2px;height:2px;background:#000"></div>
<div style="position:absolute;left:769px;top:293px;width:2px;height:2px;background:#000"></div>
<div style="position:absolute;left:773px;top:293px;width:2px;height:2px;background:#000"></div>
<svg style="position:absolute;left:877px;top:291px;" width="10" height="6" viewBox="0 0 10 6"><path d="M0.5 0.5 L9.5 0.5 L5 5.5 Z" fill="#000"/></svg>
<svg style="position:absolute;left:989px;top:291px;" width="10" height="6" viewBox="0 0 10 6"><path d="M0.5 0.5 L9.5 0.5 L5 5.5 Z" fill="#000"/></svg>
<svg style="position:absolute;left:1101px;top:291px;" width="10" height="6" viewBox="0 0 10 6"><path d="M0.5 0.5 L9.5 0.5 L5 5.5 Z" fill="#000"/></svg>
<svg style="position:absolute;left:1248px;top:291px;" width="10" height="6" viewBox="0 0 10 6"><path d="M0.5 0.5 L9.5 0.5 L5 5.5 Z" fill="#000"/></svg>
<div style="position:absolute;left:1266px;top:288px;font:400 11px/11px 'Liberation Sans', sans-serif;color:#111;white-space:pre;">приход</div>
<svg style="position:absolute;left:1310px;top:286px;" width="16" height="16" viewBox="0 0 16 16"><path d="M1.5 1.5 L14.5 14.5 M14.5 1.5 L1.5 14.5" stroke="#b41a1a" stroke-width="1.8"/><path d="M1.2 14.8 L4.5 11.5" stroke="#8a1010" stroke-width="2.6" stroke-linecap="round"/></svg>
<div style="position:absolute;right:1375.5px;top:267px;font:400 11px/11px 'Liberation Sans', sans-serif;color:#111;white-space:pre;">0</div>
<div style="position:absolute;left:46px;top:267px;font:400 11px/11px 'Liberation Sans', sans-serif;color:#111;white-space:pre;">ТС</div>
<div style="position:absolute;left:46px;top:288px;font:400 11px/11px 'Liberation Sans', sans-serif;color:#111;white-space:pre;letter-spacing:0.007px;">Заказ UPS_1 тест</div>
<div style="position:absolute;left:185px;top:288px;font:400 11px/11px 'Liberation Sans', sans-serif;color:#111;white-space:pre;">10</div>
<div style="position:absolute;left:199px;top:293px;width:2px;height:2px;background:#000"></div>
<div style="position:absolute;left:203px;top:293px;width:2px;height:2px;background:#000"></div>
<div style="position:absolute;left:207px;top:293px;width:2px;height:2px;background:#000"></div>
<div style="position:absolute;left:333px;top:267px;font:400 11px/11px 'Liberation Sans', sans-serif;color:#111;white-space:pre;letter-spacing:-0.205px;">UNION_78 3722492</div>
<div style="position:absolute;left:333px;top:288px;font:400 11px/11px 'Liberation Sans', sans-serif;color:#111;white-space:pre;">test_out_1</div>
<div style="position:absolute;left:470.6px;top:288px;font:400 11px/11px 'Liberation Sans', sans-serif;color:#111;white-space:pre;letter-spacing:-0.116px;">&quot;Техносервис&quot; (ЗАО), 63013:</div>
<div style="position:absolute;left:783px;top:267px;font:400 11px/11px 'Liberation Sans', sans-serif;color:#111;white-space:pre;letter-spacing:0.017px;">29.01.2021 15:17:</div>
<div style="position:absolute;left:783px;top:288px;font:400 11px/11px 'Liberation Sans', sans-serif;color:#111;white-space:pre;letter-spacing:0.017px;">04.08.2016 15:31:</div>
<div style="position:absolute;left:1006.6px;top:267px;font:400 11px/11px 'Liberation Sans', sans-serif;color:#111;white-space:pre;letter-spacing:0.017px;">21.03.2016 18:09:</div>
<div style="position:absolute;left:11px;top:303px;width:1px;height:23px;background:#a0a0a0"></div>
<div style="position:absolute;left:333px;top:306px;width:107px;height:18px;border:1px solid #b4b4b4;box-sizing:border-box;background:#ececec"></div>
<div style="position:absolute;left:336px;top:310.5px;font:400 11px/11px 'Liberation Sans', sans-serif;color:#111;white-space:pre;">8</div>
<div style="position:absolute;left:1326px;top:208px;width:18px;height:119px;background:#f4f4f4"></div>
<div style="position:absolute;left:1326px;top:209px;width:17px;height:18px;border:1px solid #000;box-sizing:border-box;background:#f0f0f0;"></div>
<svg style="position:absolute;left:1329px;top:214px;" width="11" height="7" viewBox="0 0 11 7"><path d="M0.5 6.5 L10.5 6.5 L5.5 0.5 Z" fill="#000"/></svg>
<div style="position:absolute;left:1326px;top:226px;width:17px;height:11px;border:1px solid #000;box-sizing:border-box;background:#f0f0f0"></div>
<div style="position:absolute;left:1326px;top:310px;width:17px;height:17px;border:1px solid #000;box-sizing:border-box;background:#f0f0f0;"></div>
<svg style="position:absolute;left:1329px;top:315px;" width="11" height="7" viewBox="0 0 11 7"><path d="M0.5 0.5 L10.5 0.5 L5.5 6.5 Z" fill="#000"/></svg>
<div style="position:absolute;left:0px;top:326px;width:1326px;height:18px;background:#f6f6f6;border-top:1px solid #c8c8c8;border-bottom:1px solid #c8c8c8;box-sizing:border-box"></div>
<div style="position:absolute;left:0px;top:327px;width:17px;height:17px;border:1px solid #000;box-sizing:border-box;background:#f0f0f0;"></div>
<svg style="position:absolute;left:4px;top:331px;" width="7" height="11" viewBox="0 0 7 11"><path d="M6.5 0.5 L6.5 10.5 L0.5 5.5 Z" fill="#000"/></svg>
<div style="position:absolute;left:16px;top:327px;width:380px;height:17px;background:#b3d3f3;border:1px solid #2f5f8f;box-sizing:border-box"></div>
<div style="position:absolute;left:1309px;top:328px;width:17px;height:16px;border:1px solid #000;box-sizing:border-box;background:#f0f0f0;"></div>
<svg style="position:absolute;left:1314px;top:331px;" width="7" height="11" viewBox="0 0 7 11"><path d="M0.5 0.5 L0.5 10.5 L6.5 5.5 Z" fill="#000"/></svg>
<div style="position:absolute;left:0px;top:344px;width:1344px;height:1px;background:#a8a8a8"></div>
<div style="position:absolute;left:470px;top:345px;width:193px;height:8px;background:#f8f8f8;border-bottom:1px solid #b0b0b0;box-sizing:border-box;border-radius:0 0 3px 3px"></div>
<div style="position:absolute;left:476px;top:348px;width:2px;height:2px;background:#a8a8a8"></div>
<div style="position:absolute;left:481px;top:348px;width:2px;height:2px;background:#a8a8a8"></div>
<div style="position:absolute;left:486px;top:348px;width:2px;height:2px;background:#a8a8a8"></div>
<div style="position:absolute;left:491px;top:348px;width:2px;height:2px;background:#a8a8a8"></div>
<div style="position:absolute;left:496px;top:348px;width:2px;height:2px;background:#a8a8a8"></div>
<div style="position:absolute;left:501px;top:348px;width:2px;height:2px;background:#a8a8a8"></div>
<div style="position:absolute;left:506px;top:348px;width:2px;height:2px;background:#a8a8a8"></div>
<div style="position:absolute;left:511px;top:348px;width:2px;height:2px;background:#a8a8a8"></div>
<div style="position:absolute;left:516px;top:348px;width:2px;height:2px;background:#a8a8a8"></div>
<div style="position:absolute;left:521px;top:348px;width:2px;height:2px;background:#a8a8a8"></div>
<div style="position:absolute;left:526px;top:348px;width:2px;height:2px;background:#a8a8a8"></div>
<div style="position:absolute;left:531px;top:348px;width:2px;height:2px;background:#a8a8a8"></div>
<div style="position:absolute;left:536px;top:348px;width:2px;height:2px;background:#a8a8a8"></div>
<div style="position:absolute;left:541px;top:348px;width:2px;height:2px;background:#a8a8a8"></div>
<div style="position:absolute;left:546px;top:348px;width:2px;height:2px;background:#a8a8a8"></div>
<div style="position:absolute;left:551px;top:348px;width:2px;height:2px;background:#a8a8a8"></div>
<div style="position:absolute;left:556px;top:348px;width:2px;height:2px;background:#a8a8a8"></div>
<div style="position:absolute;left:561px;top:348px;width:2px;height:2px;background:#a8a8a8"></div>
<div style="position:absolute;left:566px;top:348px;width:2px;height:2px;background:#a8a8a8"></div>
<div style="position:absolute;left:571px;top:348px;width:2px;height:2px;background:#a8a8a8"></div>
<div style="position:absolute;left:576px;top:348px;width:2px;height:2px;background:#a8a8a8"></div>
<div style="position:absolute;left:581px;top:348px;width:2px;height:2px;background:#a8a8a8"></div>
<div style="position:absolute;left:586px;top:348px;width:2px;height:2px;background:#a8a8a8"></div>
<div style="position:absolute;left:591px;top:348px;width:2px;height:2px;background:#a8a8a8"></div>
<div style="position:absolute;left:596px;top:348px;width:2px;height:2px;background:#a8a8a8"></div>
<div style="position:absolute;left:601px;top:348px;width:2px;height:2px;background:#a8a8a8"></div>
<div style="position:absolute;left:606px;top:348px;width:2px;height:2px;background:#a8a8a8"></div>
<div style="position:absolute;left:611px;top:348px;width:2px;height:2px;background:#a8a8a8"></div>
<div style="position:absolute;left:616px;top:348px;width:2px;height:2px;background:#a8a8a8"></div>
<div style="position:absolute;left:621px;top:348px;width:2px;height:2px;background:#a8a8a8"></div>
<div style="position:absolute;left:626px;top:348px;width:2px;height:2px;background:#a8a8a8"></div>
<div style="position:absolute;left:631px;top:348px;width:2px;height:2px;background:#a8a8a8"></div>
<div style="position:absolute;left:636px;top:348px;width:2px;height:2px;background:#a8a8a8"></div>
<div style="position:absolute;left:641px;top:348px;width:2px;height:2px;background:#a8a8a8"></div>
<div style="position:absolute;left:646px;top:348px;width:2px;height:2px;background:#a8a8a8"></div>
<div style="position:absolute;left:651px;top:348px;width:2px;height:2px;background:#a8a8a8"></div>
<div style="position:absolute;left:656px;top:348px;width:2px;height:2px;background:#a8a8a8"></div>
<div style="position:absolute;left:682px;top:345px;width:192px;height:8px;background:#f8f8f8;border-bottom:1px solid #b0b0b0;box-sizing:border-box;border-radius:0 0 3px 3px"></div>
<div style="position:absolute;left:688px;top:348px;width:2px;height:2px;background:#a8a8a8"></div>
<div style="position:absolute;left:693px;top:348px;width:2px;height:2px;background:#a8a8a8"></div>
<div style="position:absolute;left:698px;top:348px;width:2px;height:2px;background:#a8a8a8"></div>
<div style="position:absolute;left:703px;top:348px;width:2px;height:2px;background:#a8a8a8"></div>
<div style="position:absolute;left:708px;top:348px;width:2px;height:2px;background:#a8a8a8"></div>
<div style="position:absolute;left:713px;top:348px;width:2px;height:2px;background:#a8a8a8"></div>
<div style="position:absolute;left:718px;top:348px;width:2px;height:2px;background:#a8a8a8"></div>
<div style="position:absolute;left:723px;top:348px;width:2px;height:2px;background:#a8a8a8"></div>
<div style="position:absolute;left:728px;top:348px;width:2px;height:2px;background:#a8a8a8"></div>
<div style="position:absolute;left:733px;top:348px;width:2px;height:2px;background:#a8a8a8"></div>
<div style="position:absolute;left:738px;top:348px;width:2px;height:2px;background:#a8a8a8"></div>
<div style="position:absolute;left:743px;top:348px;width:2px;height:2px;background:#a8a8a8"></div>
<div style="position:absolute;left:748px;top:348px;width:2px;height:2px;background:#a8a8a8"></div>
<div style="position:absolute;left:753px;top:348px;width:2px;height:2px;background:#a8a8a8"></div>
<div style="position:absolute;left:758px;top:348px;width:2px;height:2px;background:#a8a8a8"></div>
<div style="position:absolute;left:763px;top:348px;width:2px;height:2px;background:#a8a8a8"></div>
<div style="position:absolute;left:768px;top:348px;width:2px;height:2px;background:#a8a8a8"></div>
<div style="position:absolute;left:773px;top:348px;width:2px;height:2px;background:#a8a8a8"></div>
<div style="position:absolute;left:778px;top:348px;width:2px;height:2px;background:#a8a8a8"></div>
<div style="position:absolute;left:783px;top:348px;width:2px;height:2px;background:#a8a8a8"></div>
<div style="position:absolute;left:788px;top:348px;width:2px;height:2px;background:#a8a8a8"></div>
<div style="position:absolute;left:793px;top:348px;width:2px;height:2px;background:#a8a8a8"></div>
<div style="position:absolute;left:798px;top:348px;width:2px;height:2px;background:#a8a8a8"></div>
<div style="position:absolute;left:803px;top:348px;width:2px;height:2px;background:#a8a8a8"></div>
<div style="position:absolute;left:808px;top:348px;width:2px;height:2px;background:#a8a8a8"></div>
<div style="position:absolute;left:813px;top:348px;width:2px;height:2px;background:#a8a8a8"></div>
<div style="position:absolute;left:818px;top:348px;width:2px;height:2px;background:#a8a8a8"></div>
<div style="position:absolute;left:823px;top:348px;width:2px;height:2px;background:#a8a8a8"></div>
<div style="position:absolute;left:828px;top:348px;width:2px;height:2px;background:#a8a8a8"></div>
<div style="position:absolute;left:833px;top:348px;width:2px;height:2px;background:#a8a8a8"></div>
<div style="position:absolute;left:838px;top:348px;width:2px;height:2px;background:#a8a8a8"></div>
<div style="position:absolute;left:843px;top:348px;width:2px;height:2px;background:#a8a8a8"></div>
<div style="position:absolute;left:848px;top:348px;width:2px;height:2px;background:#a8a8a8"></div>
<div style="position:absolute;left:853px;top:348px;width:2px;height:2px;background:#a8a8a8"></div>
<div style="position:absolute;left:858px;top:348px;width:2px;height:2px;background:#a8a8a8"></div>
<div style="position:absolute;left:863px;top:348px;width:2px;height:2px;background:#a8a8a8"></div>
<div style="position:absolute;left:868px;top:348px;width:2px;height:2px;background:#a8a8a8"></div>
<svg style="position:absolute;left:669px;top:347px;" width="8" height="5" viewBox="0 0 8 5"><path d="M0.5 4.5 L4 1 L7.5 4.5" fill="none" stroke="#000" stroke-width="1.3"/></svg>
<svg style="position:absolute;left:469px;top:353px;" width="75" height="20" viewBox="0 0 75 20"><defs>
      <linearGradient id="tgI488" x1="0" y1="0" x2="0" y2="1"><stop offset="0" stop-color="#ffffff"/><stop offset="1" stop-color="#e9e9e9"/></linearGradient></defs>
      <path d="M0.5 19.5 L19.5 0.5 L72 0.5 Q74.5 0.5 74.5 3 L74.5 19.5 Z" fill="url(#tgI488)" stroke="none"/>
      <path d="M0.5 19.5 L19.5 0.5 L72 0.5 Q74.5 0.5 74.5 3 L74.5 19.5" fill="none" stroke="#a8a8a8" stroke-width="1"/></svg>
<div style="position:absolute;left:489.7px;top:359.8px;font:400 11px/11px 'Liberation Sans', sans-serif;color:#111;white-space:pre;letter-spacing:0.195px;">Упаковка</div>
<svg style="position:absolute;left:367px;top:353px;" width="113" height="20" viewBox="0 0 113 20"><defs>
      <linearGradient id="tgI386" x1="0" y1="0" x2="0" y2="1"><stop offset="0" stop-color="#ffffff"/><stop offset="1" stop-color="#e9e9e9"/></linearGradient></defs>
      <path d="M0.5 19.5 L19.5 0.5 L110 0.5 Q112.5 0.5 112.5 3 L112.5 19.5 Z" fill="url(#tgI386)" stroke="none"/>
      <path d="M0.5 19.5 L19.5 0.5 L110 0.5 Q112.5 0.5 112.5 3 L112.5 19.5" fill="none" stroke="#a8a8a8" stroke-width="1"/></svg>
<div style="position:absolute;left:388.5px;top:359.8px;font:400 11px/11px 'Liberation Sans', sans-serif;color:#111;white-space:pre;letter-spacing:0.016px;">Габариты заказа</div>
<svg style="position:absolute;left:259px;top:353px;" width="119" height="20" viewBox="0 0 119 20"><defs>
      <linearGradient id="tgI278" x1="0" y1="0" x2="0" y2="1"><stop offset="0" stop-color="#ffffff"/><stop offset="1" stop-color="#e9e9e9"/></linearGradient></defs>
      <path d="M0.5 19.5 L19.5 0.5 L116 0.5 Q118.5 0.5 118.5 3 L118.5 19.5 Z" fill="url(#tgI278)" stroke="none"/>
      <path d="M0.5 19.5 L19.5 0.5 L116 0.5 Q118.5 0.5 118.5 3 L118.5 19.5" fill="none" stroke="#a8a8a8" stroke-width="1"/></svg>
<div style="position:absolute;left:279.8px;top:359.8px;font:400 11px/11px 'Liberation Sans', sans-serif;color:#111;white-space:pre;letter-spacing:-0.032px;">Протокол резерва</div>
<svg style="position:absolute;left:100px;top:353px;" width="112" height="20" viewBox="0 0 112 20"><defs>
      <linearGradient id="tgI119" x1="0" y1="0" x2="0" y2="1"><stop offset="0" stop-color="#ffffff"/><stop offset="1" stop-color="#e9e9e9"/></linearGradient></defs>
      <path d="M0.5 19.5 L19.5 0.5 L109 0.5 Q111.5 0.5 111.5 3 L111.5 19.5 Z" fill="url(#tgI119)" stroke="none"/>
      <path d="M0.5 19.5 L19.5 0.5 L109 0.5 Q111.5 0.5 111.5 3 L111.5 19.5" fill="none" stroke="#a8a8a8" stroke-width="1"/></svg>
<div style="position:absolute;left:119px;top:359.8px;font:400 11px/11px 'Liberation Sans', sans-serif;color:#111;white-space:pre;letter-spacing:0.044px;">Подборка заказа</div>
<svg style="position:absolute;left:50px;top:353px;" width="60" height="20" viewBox="0 0 60 20"><defs>
      <linearGradient id="tgI69" x1="0" y1="0" x2="0" y2="1"><stop offset="0" stop-color="#ffffff"/><stop offset="1" stop-color="#e9e9e9"/></linearGradient></defs>
      <path d="M0.5 19.5 L19.5 0.5 L57 0.5 Q59.5 0.5 59.5 3 L59.5 19.5 Z" fill="url(#tgI69)" stroke="none"/>
      <path d="M0.5 19.5 L19.5 0.5 L57 0.5 Q59.5 0.5 59.5 3 L59.5 19.5" fill="none" stroke="#a8a8a8" stroke-width="1"/></svg>
<div style="position:absolute;left:69.7px;top:359.8px;font:400 11px/11px 'Liberation Sans', sans-serif;color:#111;white-space:pre;letter-spacing:0.079px;">Услуги</div>
<svg style="position:absolute;left:-1px;top:353px;" width="61" height="20" viewBox="0 0 61 20"><defs>
      <linearGradient id="tgI18" x1="0" y1="0" x2="0" y2="1"><stop offset="0" stop-color="#ffffff"/><stop offset="1" stop-color="#e9e9e9"/></linearGradient></defs>
      <path d="M0.5 19.5 L19.5 0.5 L58 0.5 Q60.5 0.5 60.5 3 L60.5 19.5 Z" fill="url(#tgI18)" stroke="none"/>
      <path d="M0.5 19.5 L19.5 0.5 L58 0.5 Q60.5 0.5 60.5 3 L60.5 19.5" fill="none" stroke="#a8a8a8" stroke-width="1"/></svg>
<div style="position:absolute;left:18.5px;top:359.8px;font:400 11px/11px 'Liberation Sans', sans-serif;color:#111;white-space:pre;letter-spacing:-0.073px;">Состав</div>
<svg style="position:absolute;left:200px;top:353px;" width="70" height="20" viewBox="0 0 70 20"><defs>
      <linearGradient id="tgA219" x1="0" y1="0" x2="0" y2="1"><stop offset="0" stop-color="#ffffff"/><stop offset="1" stop-color="#f6f6f6"/></linearGradient></defs>
      <path d="M0.5 19.5 L19.5 0.5 L67 0.5 Q69.5 0.5 69.5 3 L69.5 19.5 Z" fill="url(#tgA219)" stroke="none"/>
      <path d="M0.5 19.5 L19.5 0.5 L67 0.5 Q69.5 0.5 69.5 3 L69.5 19.5" fill="none" stroke="#a8a8a8" stroke-width="1"/></svg>
<svg style="position:absolute;left:219px;top:353px;" width="51" height="4" viewBox="0 0 51 4"><path d="M0 4 L0 0.5 L48 0.5 Q51 0.5 51 3 L51 4 Z" fill="#2a72b5"/></svg>
<div style="position:absolute;left:221.4px;top:359.8px;font:400 11px/11px 'Liberation Sans', sans-serif;color:#111;white-space:pre;letter-spacing:-0.069px;">Задания</div>
<div style="position:absolute;left:669px;top:353px;width:105px;height:19px;background:#fff;border-left:1px solid #d0d0d0;border-top:1px solid #e0e0e0;box-sizing:border-box"></div>
<svg style="position:absolute;left:757px;top:355px;" width="16" height="15" viewBox="0 0 16 15">
      <rect x="1" y="5" width="6" height="9" rx="1" fill="#8aaad8" stroke="#3a5a9a" stroke-width="0.8"/>
      <rect x="9" y="5" width="6" height="9" rx="1" fill="#8aaad8" stroke="#3a5a9a" stroke-width="0.8"/>
      <rect x="2" y="1" width="4" height="5" fill="#3a5a9a"/><rect x="10" y="1" width="4" height="5" fill="#3a5a9a"/>
      <rect x="6" y="6" width="4" height="3" fill="#3a5a9a"/></svg>
<svg style="position:absolute;left:782px;top:354px;" width="17" height="13" viewBox="0 0 17 13">
      <rect x="5.5" y="3.5" width="7.5" height="8" fill="none" stroke="#000" stroke-width="1.3"/>
      <path d="M1.5 3 L8.5 9.5 L16 1.5" fill="none" stroke="#808080" stroke-width="1.6"/></svg>
<div style="position:absolute;left:801px;top:354.7px;font:700 11px/11px 'Liberation Sans', sans-serif;color:#0c0c50;white-space:pre;letter-spacing:0.554px;">Удаленные</div>
<div style="position:absolute;left:878.2px;top:354.7px;font:700 11px/11px 'Liberation Sans', sans-serif;color:#0c0c50;white-space:pre;letter-spacing:0.483px;">Доп. поле:</div>
<div style="position:absolute;left:875px;top:369px;width:66px;height:5px;background:#e0202a;border-radius:3px;z-index:5"></div>
<div style="position:absolute;left:857px;top:364.5px;font:700 13px/13px 'Liberation Sans', sans-serif;color:#d8282c;white-space:pre;z-index:5;">3</div>
<div style="position:absolute;left:203px;top:373px;width:66px;height:5px;background:#e0202a;border-radius:3px;z-index:5"></div>
<div style="position:absolute;left:189.7px;top:368.8px;font:700 13px/13px 'Liberation Sans', sans-serif;color:#d8282c;white-space:pre;z-index:5;">2</div>
<div style="position:absolute;left:943px;top:353px;width:240px;height:19px;border:1px solid #a9a9a9;box-sizing:border-box;background:#fff"></div>
<div style="position:absolute;left:945px;top:358px;font:400 11px/11px 'Liberation Sans', sans-serif;color:#000;white-space:pre;letter-spacing:-0.153px;">ШК номенклатуры</div>
<div style="position:absolute;left:1165px;top:354px;width:17px;height:17px;background:#f0f0f0"></div>
<div style="position:absolute;left:1168px;top:361px;width:2px;height:2px;background:#000"></div>
<div style="position:absolute;left:1172px;top:361px;width:2px;height:2px;background:#000"></div>
<div style="position:absolute;left:1176px;top:361px;width:2px;height:2px;background:#000"></div>
<div style="position:absolute;left:0px;top:372px;width:80px;height:332px;background:#f0f0f0"></div>
<div style="position:absolute;left:5px;top:382px;width:54px;height:33px;border:1px solid #000;box-sizing:border-box;background:#f0f0f0;"></div>
<svg style="position:absolute;left:24px;top:390px;" width="16" height="16" viewBox="0 0 16 16">
      <path d="M6 1.5 h4 v4.5 h4.5 v4 h-4.5 v4.5 h-4 v-4.5 h-4.5 v-4 h4.5 z" fill="#6cc75a" stroke="#3a8a30" stroke-width="1"/></svg>
<div style="position:absolute;left:5px;top:426px;width:54px;height:33px;border:1px solid #000;box-sizing:border-box;background:#f0f0f0;"></div>
<svg style="position:absolute;left:24px;top:434px;" width="16" height="16" viewBox="0 0 16 16"><path d="M1.5 1.5 L14.5 14.5 M14.5 1.5 L1.5 14.5" stroke="#b41a1a" stroke-width="1.8"/><path d="M1.2 14.8 L4.5 11.5" stroke="#8a1010" stroke-width="2.6" stroke-linecap="round"/></svg>
<svg style="position:absolute;left:2px;top:476px;" width="17" height="13" viewBox="0 0 17 13">
      <rect x="5.5" y="3.5" width="7.5" height="8" fill="none" stroke="#000" stroke-width="1.3"/>
      <path d="M1.5 3 L8.5 9.5 L16 1.5" fill="none" stroke="#808080" stroke-width="1.6"/></svg>
<div style="position:absolute;left:21.3px;top:477px;font:700 11px/11px 'Liberation Sans', sans-serif;color:#0c0c50;white-space:pre;letter-spacing:0.100px;">С удал.</div>
<svg style="position:absolute;left:2px;top:508px;" width="17" height="13" viewBox="0 0 17 13">
      <rect x="5.5" y="3.5" width="7.5" height="8" fill="none" stroke="#000" stroke-width="1.3"/>
      <path d="M1.5 3 L8.5 9.5 L16 1.5" fill="none" stroke="#808080" stroke-width="1.6"/></svg>
<div style="position:absolute;left:21.3px;top:509px;font:700 11px/11px 'Liberation Sans', sans-serif;color:#0c0c50;white-space:pre;letter-spacing:0.613px;">Перем.</div>
<svg style="position:absolute;left:2px;top:547px;" width="17" height="13" viewBox="0 0 17 13">
      <rect x="5.5" y="3.5" width="7.5" height="8" fill="none" stroke="#000" stroke-width="1.3"/>
      <path d="M1.5 3 L8.5 9.5 L16 1.5" fill="none" stroke="#808080" stroke-width="1.6"/></svg>
<div style="position:absolute;left:21.3px;top:548px;font:700 11px/11px 'Liberation Sans', sans-serif;color:#0c0c50;white-space:pre;letter-spacing:0.617px;">На упак.</div>
<div style="position:absolute;left:80px;top:372px;width:1264px;height:38px;background:#a0a0a0"></div>
<div style="position:absolute;left:88.3px;top:386.4px;font:400 11px/11px 'Liberation Sans', sans-serif;color:#d9d9d9;white-space:pre;letter-spacing:0.040px;">Перетащите столбец сюда для группировки по данному столбцу</div>
<div style="position:absolute;left:80px;top:409px;width:1264px;height:251px;background:#fff"></div>
<div style="position:absolute;left:80px;top:409px;width:1px;height:251px;background:#a0a0a0"></div>
<div style="position:absolute;left:81px;top:409px;width:1261px;height:37px;background:#f0f0f0"></div>
<div style="position:absolute;left:81px;top:409px;width:11px;height:152px;background:#f0f0f0"></div>
<div style="position:absolute;left:92px;top:447px;width:1250px;height:18px;background:#0a74d6"></div>
<div style="position:absolute;left:81px;top:409px;width:1261px;height:1px;background:#000"></div>
<div style="position:absolute;left:92px;top:427px;width:1250px;height:1px;background:#000"></div>
<div style="position:absolute;left:92px;top:446px;width:1250px;height:1px;background:#000"></div>
<div style="position:absolute;left:81px;top:409px;width:1px;height:152px;background:#000"></div>
<div style="position:absolute;left:92px;top:409px;width:2px;height:152px;background:#000"></div>
<div style="position:absolute;left:581px;top:409px;width:2px;height:37px;background:#000"></div>
<div style="position:absolute;left:1050px;top:409px;width:2px;height:37px;background:#000"></div>
<div style="position:absolute;left:112px;top:427px;width:1px;height:19px;background:#000"></div>
<div style="position:absolute;left:132px;top:427px;width:1px;height:19px;background:#000"></div>
<div style="position:absolute;left:198px;top:427px;width:1px;height:19px;background:#000"></div>
<div style="position:absolute;left:295px;top:427px;width:1px;height:19px;background:#000"></div>
<div style="position:absolute;left:315px;top:427px;width:1px;height:19px;background:#000"></div>
<div style="position:absolute;left:335px;top:427px;width:1px;height:19px;background:#000"></div>
<div style="position:absolute;left:355px;top:427px;width:1px;height:19px;background:#000"></div>
<div style="position:absolute;left:375px;top:427px;width:1px;height:19px;background:#000"></div>
<div style="position:absolute;left:395px;top:427px;width:1px;height:19px;background:#000"></div>
<div style="position:absolute;left:415px;top:427px;width:1px;height:19px;background:#000"></div>
<div style="position:absolute;left:435px;top:427px;width:1px;height:19px;background:#000"></div>
<div style="position:absolute;left:455px;top:427px;width:1px;height:19px;background:#000"></div>
<div style="position:absolute;left:475px;top:427px;width:1px;height:19px;background:#000"></div>
<div style="position:absolute;left:495px;top:427px;width:1px;height:19px;background:#000"></div>
<div style="position:absolute;left:515px;top:427px;width:1px;height:19px;background:#000"></div>
<div style="position:absolute;left:535px;top:427px;width:1px;height:19px;background:#000"></div>
<div style="position:absolute;left:581px;top:427px;width:2px;height:19px;background:#000"></div>
<div style="position:absolute;left:634px;top:427px;width:1px;height:19px;background:#000"></div>
<div style="position:absolute;left:683px;top:427px;width:1px;height:19px;background:#000"></div>
<div style="position:absolute;left:751px;top:427px;width:1px;height:19px;background:#000"></div>
<div style="position:absolute;left:798px;top:427px;width:1px;height:19px;background:#000"></div>
<div style="position:absolute;left:849px;top:427px;width:1px;height:19px;background:#000"></div>
<div style="position:absolute;left:898px;top:427px;width:1px;height:19px;background:#000"></div>
<div style="position:absolute;left:948px;top:427px;width:1px;height:19px;background:#000"></div>
<div style="position:absolute;left:997px;top:427px;width:1px;height:19px;background:#000"></div>
<div style="position:absolute;left:1050px;top:427px;width:2px;height:19px;background:#000"></div>
<div style="position:absolute;left:1070px;top:427px;width:1px;height:19px;background:#000"></div>
<div style="position:absolute;left:1126px;top:427px;width:1px;height:19px;background:#000"></div>
<div style="position:absolute;left:1179px;top:427px;width:1px;height:19px;background:#000"></div>
<div style="position:absolute;left:1269px;top:427px;width:1px;height:19px;background:#000"></div>
<div style="position:absolute;left:1289px;top:427px;width:1px;height:19px;background:#000"></div>
<div style="position:absolute;left:1341px;top:409px;width:1px;height:37px;background:#000"></div>
<div style="position:absolute;left:94px;top:465px;width:1248px;height:1px;background:#a0a0a0"></div>
<div style="position:absolute;left:81px;top:465px;width:12px;height:1px;background:#000"></div>
<div style="position:absolute;left:94px;top:484px;width:1248px;height:1px;background:#a0a0a0"></div>
<div style="position:absolute;left:81px;top:484px;width:12px;height:1px;background:#000"></div>
<div style="position:absolute;left:94px;top:503px;width:1248px;height:1px;background:#a0a0a0"></div>
<div style="position:absolute;left:81px;top:503px;width:12px;height:1px;background:#000"></div>
<div style="position:absolute;left:94px;top:522px;width:1248px;height:1px;background:#a0a0a0"></div>
<div style="position:absolute;left:81px;top:522px;width:12px;height:1px;background:#000"></div>
<div style="position:absolute;left:94px;top:541px;width:1248px;height:1px;background:#a0a0a0"></div>
<div style="position:absolute;left:81px;top:541px;width:12px;height:1px;background:#000"></div>
<div style="position:absolute;left:94px;top:560px;width:1248px;height:1px;background:#a0a0a0"></div>
<div style="position:absolute;left:81px;top:560px;width:12px;height:1px;background:#000"></div>
<div style="position:absolute;left:112px;top:447px;width:1px;height:18px;background:#5a9fe0"></div>
<div style="position:absolute;left:112px;top:466px;width:1px;height:94px;background:#a0a0a0"></div>
<div style="position:absolute;left:132px;top:447px;width:1px;height:18px;background:#5a9fe0"></div>
<div style="position:absolute;left:132px;top:466px;width:1px;height:94px;background:#a0a0a0"></div>
<div style="position:absolute;left:198px;top:447px;width:1px;height:18px;background:#5a9fe0"></div>
<div style="position:absolute;left:198px;top:466px;width:1px;height:94px;background:#a0a0a0"></div>
<div style="position:absolute;left:295px;top:447px;width:1px;height:18px;background:#5a9fe0"></div>
<div style="position:absolute;left:295px;top:466px;width:1px;height:94px;background:#a0a0a0"></div>
<div style="position:absolute;left:315px;top:447px;width:1px;height:18px;background:#5a9fe0"></div>
<div style="position:absolute;left:315px;top:466px;width:1px;height:94px;background:#a0a0a0"></div>
<div style="position:absolute;left:335px;top:447px;width:1px;height:18px;background:#5a9fe0"></div>
<div style="position:absolute;left:335px;top:466px;width:1px;height:94px;background:#a0a0a0"></div>
<div style="position:absolute;left:355px;top:447px;width:1px;height:18px;background:#5a9fe0"></div>
<div style="position:absolute;left:355px;top:466px;width:1px;height:94px;background:#a0a0a0"></div>
<div style="position:absolute;left:375px;top:447px;width:1px;height:18px;background:#5a9fe0"></div>
<div style="position:absolute;left:375px;top:466px;width:1px;height:94px;background:#a0a0a0"></div>
<div style="position:absolute;left:395px;top:447px;width:1px;height:18px;background:#5a9fe0"></div>
<div style="position:absolute;left:395px;top:466px;width:1px;height:94px;background:#a0a0a0"></div>
<div style="position:absolute;left:415px;top:447px;width:1px;height:18px;background:#5a9fe0"></div>
<div style="position:absolute;left:415px;top:466px;width:1px;height:94px;background:#a0a0a0"></div>
<div style="position:absolute;left:435px;top:447px;width:1px;height:18px;background:#5a9fe0"></div>
<div style="position:absolute;left:435px;top:466px;width:1px;height:94px;background:#a0a0a0"></div>
<div style="position:absolute;left:455px;top:447px;width:1px;height:18px;background:#5a9fe0"></div>
<div style="position:absolute;left:455px;top:466px;width:1px;height:94px;background:#a0a0a0"></div>
<div style="position:absolute;left:475px;top:447px;width:1px;height:18px;background:#5a9fe0"></div>
<div style="position:absolute;left:475px;top:466px;width:1px;height:94px;background:#a0a0a0"></div>
<div style="position:absolute;left:495px;top:447px;width:1px;height:18px;background:#5a9fe0"></div>
<div style="position:absolute;left:495px;top:466px;width:1px;height:94px;background:#a0a0a0"></div>
<div style="position:absolute;left:515px;top:447px;width:1px;height:18px;background:#5a9fe0"></div>
<div style="position:absolute;left:515px;top:466px;width:1px;height:94px;background:#a0a0a0"></div>
<div style="position:absolute;left:535px;top:447px;width:1px;height:18px;background:#5a9fe0"></div>
<div style="position:absolute;left:535px;top:466px;width:1px;height:94px;background:#a0a0a0"></div>
<div style="position:absolute;left:581px;top:447px;width:1px;height:18px;background:#5a9fe0"></div>
<div style="position:absolute;left:581px;top:466px;width:1px;height:94px;background:#a0a0a0"></div>
<div style="position:absolute;left:634px;top:447px;width:1px;height:18px;background:#5a9fe0"></div>
<div style="position:absolute;left:634px;top:466px;width:1px;height:94px;background:#a0a0a0"></div>
<div style="position:absolute;left:683px;top:447px;width:1px;height:18px;background:#5a9fe0"></div>
<div style="position:absolute;left:683px;top:466px;width:1px;height:94px;background:#a0a0a0"></div>
<div style="position:absolute;left:751px;top:447px;width:1px;height:18px;background:#5a9fe0"></div>
<div style="position:absolute;left:751px;top:466px;width:1px;height:94px;background:#a0a0a0"></div>
<div style="position:absolute;left:798px;top:447px;width:1px;height:18px;background:#5a9fe0"></div>
<div style="position:absolute;left:798px;top:466px;width:1px;height:94px;background:#a0a0a0"></div>
<div style="position:absolute;left:849px;top:447px;width:1px;height:18px;background:#5a9fe0"></div>
<div style="position:absolute;left:849px;top:466px;width:1px;height:94px;background:#a0a0a0"></div>
<div style="position:absolute;left:898px;top:447px;width:1px;height:18px;background:#5a9fe0"></div>
<div style="position:absolute;left:898px;top:466px;width:1px;height:94px;background:#a0a0a0"></div>
<div style="position:absolute;left:948px;top:447px;width:1px;height:18px;background:#5a9fe0"></div>
<div style="position:absolute;left:948px;top:466px;width:1px;height:94px;background:#a0a0a0"></div>
<div style="position:absolute;left:997px;top:447px;width:1px;height:18px;background:#5a9fe0"></div>
<div style="position:absolute;left:997px;top:466px;width:1px;height:94px;background:#a0a0a0"></div>
<div style="position:absolute;left:1050px;top:447px;width:1px;height:18px;background:#5a9fe0"></div>
<div style="position:absolute;left:1050px;top:466px;width:1px;height:94px;background:#a0a0a0"></div>
<div style="position:absolute;left:1070px;top:447px;width:1px;height:18px;background:#5a9fe0"></div>
<div style="position:absolute;left:1070px;top:466px;width:1px;height:94px;background:#a0a0a0"></div>
<div style="position:absolute;left:1126px;top:447px;width:1px;height:18px;background:#5a9fe0"></div>
<div style="position:absolute;left:1126px;top:466px;width:1px;height:94px;background:#a0a0a0"></div>
<div style="position:absolute;left:1179px;top:447px;width:1px;height:18px;background:#5a9fe0"></div>
<div style="position:absolute;left:1179px;top:466px;width:1px;height:94px;background:#a0a0a0"></div>
<div style="position:absolute;left:1269px;top:447px;width:1px;height:18px;background:#5a9fe0"></div>
<div style="position:absolute;left:1269px;top:466px;width:1px;height:94px;background:#a0a0a0"></div>
<div style="position:absolute;left:1289px;top:447px;width:1px;height:18px;background:#5a9fe0"></div>
<div style="position:absolute;left:1289px;top:466px;width:1px;height:94px;background:#a0a0a0"></div>
<div style="position:absolute;left:1341px;top:447px;width:1px;height:113px;background:#a0a0a0"></div>
<div style="position:absolute;left:94px;top:446px;width:1248px;height:1px;background-image:repeating-linear-gradient(90deg,#000 0 1px,transparent 1px 2px)"></div>
<div style="position:absolute;left:94px;top:465px;width:1248px;height:1px;background-image:repeating-linear-gradient(90deg,#9ab 0 1px,#fff 1px 2px)"></div>
<div style="position:absolute;left:94px;top:447px;width:18px;height:18px;background:#fff;outline:1px dotted #000;outline-offset:-1px"></div>
<svg style="position:absolute;left:84px;top:451px;" width="7" height="10" viewBox="0 0 7 10"><path d="M1 0.5 L6 5 L1 9.5 Z" fill="#000"/></svg>
<div style="position:absolute;left:337px;transform:translateX(-50%);top:414px;font:400 11px/11px 'Liberation Sans', sans-serif;color:#111;white-space:pre;">Номенклатура</div>
<div style="position:absolute;left:816px;transform:translateX(-50%);top:414px;font:400 11px/11px 'Liberation Sans', sans-serif;color:#111;white-space:pre;">Адрес</div>
<div style="position:absolute;left:95px;top:430.8px;font:400 11px/11px 'Liberation Sans', sans-serif;color:#111;white-space:pre;width:16px;overflow:hidden;padding:2px 0 3px 0;">Ко,</div>
<div style="position:absolute;left:114px;top:430.8px;font:400 11px/11px 'Liberation Sans', sans-serif;color:#111;white-space:pre;width:17px;overflow:hidden;padding:2px 0 3px 0;">Арт</div>
<div style="position:absolute;left:134px;top:430.8px;font:400 11px/11px 'Liberation Sans', sans-serif;color:#111;white-space:pre;width:63px;overflow:hidden;padding:2px 0 3px 0;">Статус задания</div>
<div style="position:absolute;left:200px;top:430.8px;font:400 11px/11px 'Liberation Sans', sans-serif;color:#111;white-space:pre;width:94px;overflow:hidden;padding:2px 0 3px 0;">ШК номенклатуры</div>
<div style="position:absolute;left:317px;top:430.8px;font:400 11px/11px 'Liberation Sans', sans-serif;color:#111;white-space:pre;width:17px;overflow:hidden;padding:2px 0 3px 0;">Наименование</div>
<div style="position:absolute;left:337px;top:430.8px;font:400 11px/11px 'Liberation Sans', sans-serif;color:#111;white-space:pre;width:17px;overflow:hidden;padding:2px 0 3px 0;">Состав</div>
<div style="position:absolute;left:357px;top:430.8px;font:400 11px/11px 'Liberation Sans', sans-serif;color:#111;white-space:pre;width:17px;overflow:hidden;padding:2px 0 3px 0;">Срок</div>
<div style="position:absolute;left:377px;top:430.8px;font:400 11px/11px 'Liberation Sans', sans-serif;color:#111;white-space:pre;width:17px;overflow:hidden;padding:2px 0 3px 0;">V п</div>
<div style="position:absolute;left:397px;top:430.8px;font:400 11px/11px 'Liberation Sans', sans-serif;color:#111;white-space:pre;width:17px;overflow:hidden;padding:2px 0 3px 0;">Партия</div>
<div style="position:absolute;left:417px;top:430.8px;font:400 11px/11px 'Liberation Sans', sans-serif;color:#111;white-space:pre;width:17px;overflow:hidden;padding:2px 0 3px 0;">Серия</div>
<div style="position:absolute;left:537px;top:430.8px;font:400 11px/11px 'Liberation Sans', sans-serif;color:#111;white-space:pre;width:43px;overflow:hidden;padding:2px 0 3px 0;">КГУ Паллета</div>
<div style="position:absolute;left:585px;top:430.8px;font:400 11px/11px 'Liberation Sans', sans-serif;color:#111;white-space:pre;width:48px;overflow:hidden;padding:2px 0 3px 0;">Паллета</div>
<div style="position:absolute;left:636px;top:430.8px;font:400 11px/11px 'Liberation Sans', sans-serif;color:#111;white-space:pre;width:46px;overflow:hidden;padding:2px 0 3px 0;">Откуда</div>
<div style="position:absolute;left:685px;top:430.8px;font:400 11px/11px 'Liberation Sans', sans-serif;color:#111;white-space:pre;width:65px;overflow:hidden;padding:2px 0 3px 0;">Куда</div>
<div style="position:absolute;left:753px;top:430.8px;font:400 11px/11px 'Liberation Sans', sans-serif;color:#111;white-space:pre;width:44px;overflow:hidden;padding:2px 0 3px 0;">В резерве</div>
<div style="position:absolute;left:800px;top:430.8px;font:400 11px/11px 'Liberation Sans', sans-serif;color:#111;white-space:pre;width:48px;overflow:hidden;padding:2px 0 3px 0;">Подобрано</div>
<div style="position:absolute;left:851px;top:430.8px;font:400 11px/11px 'Liberation Sans', sans-serif;color:#111;white-space:pre;width:46px;overflow:hidden;padding:2px 0 3px 0;">Оп. ед</div>
<div style="position:absolute;left:900px;top:430.8px;font:400 11px/11px 'Liberation Sans', sans-serif;color:#111;white-space:pre;width:47px;overflow:hidden;padding:2px 0 3px 0;">Приоритет</div>
<div style="position:absolute;left:950px;top:430.8px;font:400 11px/11px 'Liberation Sans', sans-serif;color:#111;white-space:pre;width:46px;overflow:hidden;padding:2px 0 3px 0;">Опер. ед</div>
<div style="position:absolute;left:999px;top:430.8px;font:400 11px/11px 'Liberation Sans', sans-serif;color:#111;white-space:pre;width:50px;overflow:hidden;padding:2px 0 3px 0;">Порядок</div>
<div style="position:absolute;left:1072px;top:430.8px;font:400 11px/11px 'Liberation Sans', sans-serif;color:#111;white-space:pre;width:53px;overflow:hidden;padding:2px 0 3px 0;">ФИО</div>
<div style="position:absolute;left:1128px;top:430.8px;font:400 11px/11px 'Liberation Sans', sans-serif;color:#111;white-space:pre;width:50px;overflow:hidden;padding:2px 0 3px 0;">Фикс</div>
<div style="position:absolute;left:1181px;top:430.8px;font:400 11px/11px 'Liberation Sans', sans-serif;color:#111;white-space:pre;width:87px;overflow:hidden;padding:2px 0 3px 0;">Тип задания</div>
<div style="position:absolute;left:1271px;top:430.8px;font:400 11px/11px 'Liberation Sans', sans-serif;color:#111;white-space:pre;width:17px;overflow:hidden;padding:2px 0 3px 0;">N</div>
<div style="position:absolute;left:1291px;top:430.8px;font:400 11px/11px 'Liberation Sans', sans-serif;color:#111;white-space:pre;width:49px;overflow:hidden;padding:2px 0 3px 0;">Блок задания</div>
<svg style="position:absolute;left:1053px;top:431px;" width="15" height="15" viewBox="0 0 15 15"><path d="M1.5 1.5 L13.5 13.5 M13.5 1.5 L1.5 13.5" stroke="#b41a1a" stroke-width="1.8"/><path d="M1.2 13.8 L4.5 10.5" stroke="#8a1010" stroke-width="2.6" stroke-linecap="round"/></svg>
<div style="position:absolute;left:134px;top:449px;font:400 11px/11px 'Liberation Sans', sans-serif;color:#d6f4ff;white-space:pre;width:63px;overflow:hidden;padding:2px 0 3px 0;">Выполнено</div>
<div style="position:absolute;left:357px;top:449px;width:16px;height:14px;background:#e6f6ff"></div>
<svg style="position:absolute;left:361px;top:454px;" width="10" height="6" viewBox="0 0 10 6"><path d="M0.5 0.5 L9.5 0.5 L5 5.5 Z" fill="#000"/></svg>
<div style="position:absolute;left:537px;top:451px;font:400 11px/11px 'Liberation Sans', sans-serif;color:#d6f4ff;white-space:pre;">0</div>
<div style="position:absolute;right:955px;top:451px;font:400 11px/11px 'Liberation Sans', sans-serif;color:#d6f4ff;white-space:pre;">109581</div>
<div style="position:absolute;left:636px;top:449px;font:400 11px/11px 'Liberation Sans', sans-serif;color:#d6f4ff;white-space:pre;width:46px;overflow:hidden;padding:2px 0 3px 0;">15.01-1/:</div>
<div style="position:absolute;left:685px;top:449px;font:400 11px/11px 'Liberation Sans', sans-serif;color:#d6f4ff;white-space:pre;width:65px;overflow:hidden;padding:2px 0 3px 0;">15.01-1/1/98</div>
<div style="position:absolute;right:791px;top:451px;font:400 11px/11px 'Liberation Sans', sans-serif;color:#d6f4ff;white-space:pre;">6</div>
<div style="position:absolute;right:740px;top:451px;font:400 11px/11px 'Liberation Sans', sans-serif;color:#d6f4ff;white-space:pre;">0</div>
<div style="position:absolute;right:691px;top:451px;font:400 11px/11px 'Liberation Sans', sans-serif;color:#d6f4ff;white-space:pre;">6</div>
<div style="position:absolute;right:641px;top:451px;font:400 11px/11px 'Liberation Sans', sans-serif;color:#d6f4ff;white-space:pre;">1999</div>
<div style="position:absolute;left:950px;top:451px;font:400 11px/11px 'Liberation Sans', sans-serif;color:#d6f4ff;white-space:pre;">Штуки</div>
<div style="position:absolute;right:539px;top:451px;font:400 11px/11px 'Liberation Sans', sans-serif;color:#d6f4ff;white-space:pre;">0</div>
<div style="position:absolute;left:1052px;top:448px;width:17px;height:17px;background:#fff"></div>
<svg style="position:absolute;left:1052px;top:449px;" width="15" height="15" viewBox="0 0 15 15"><path d="M1.5 1.5 L13.5 13.5 M13.5 1.5 L1.5 13.5" stroke="#b41a1a" stroke-width="1.8"/><path d="M1.2 13.8 L4.5 10.5" stroke="#8a1010" stroke-width="2.6" stroke-linecap="round"/></svg>
<div style="position:absolute;left:1072.7px;top:451px;font:400 11px/11px 'Liberation Sans', sans-serif;color:#d6f4ff;white-space:pre;">Богданов</div>
<div style="position:absolute;right:410px;top:451px;font:400 11px/11px 'Liberation Sans', sans-serif;color:#d6f4ff;white-space:pre;">0</div>
<div style="position:absolute;left:1181px;top:449px;font:400 11px/11px 'Liberation Sans', sans-serif;color:#d6f4ff;white-space:pre;width:86px;overflow:hidden;padding:2px 0 3px 0;">Подборка в подборку</div>
<div style="position:absolute;left:1271px;top:449px;width:16px;height:15px;background:#e6f6ff"></div>
<div style="position:absolute;left:1275px;top:451px;font:400 11px/11px 'Liberation Sans', sans-serif;color:#111;white-space:pre;">A</div>
<div style="position:absolute;right:248px;top:451px;font:400 11px/11px 'Liberation Sans', sans-serif;color:#d6f4ff;white-space:pre;">3003</div>
<div style="position:absolute;left:134px;top:468px;font:400 11px/11px 'Liberation Sans', sans-serif;color:#111;white-space:pre;width:63px;overflow:hidden;padding:2px 0 3px 0;">Создано</div>
<div style="position:absolute;left:357px;top:467px;width:16px;height:14px;background:#f0f0f0"></div>
<svg style="position:absolute;left:361px;top:472px;" width="10" height="6" viewBox="0 0 10 6"><path d="M0.5 0.5 L9.5 0.5 L5 5.5 Z" fill="#000"/></svg>
<div style="position:absolute;left:537px;top:470px;font:400 11px/11px 'Liberation Sans', sans-serif;color:#111;white-space:pre;">0</div>
<div style="position:absolute;right:955px;top:470px;font:400 11px/11px 'Liberation Sans', sans-serif;color:#111;white-space:pre;">109582</div>
<div style="position:absolute;left:636px;top:468px;font:400 11px/11px 'Liberation Sans', sans-serif;color:#111;white-space:pre;width:46px;overflow:hidden;padding:2px 0 3px 0;">15.01-1/:</div>
<div style="position:absolute;left:685px;top:470px;font:400 11px/11px 'Liberation Sans', sans-serif;color:#111;white-space:pre;">991</div>
<div style="position:absolute;right:791px;top:470px;font:400 11px/11px 'Liberation Sans', sans-serif;color:#111;white-space:pre;">1</div>
<div style="position:absolute;right:740px;top:470px;font:400 11px/11px 'Liberation Sans', sans-serif;color:#111;white-space:pre;">1</div>
<div style="position:absolute;right:641px;top:470px;font:400 11px/11px 'Liberation Sans', sans-serif;color:#111;white-space:pre;">1</div>
<div style="position:absolute;right:539px;top:470px;font:400 11px/11px 'Liberation Sans', sans-serif;color:#111;white-space:pre;">0</div>
<svg style="position:absolute;left:1052px;top:467px;" width="15" height="15" viewBox="0 0 15 15"><path d="M1.5 1.5 L13.5 13.5 M13.5 1.5 L1.5 13.5" stroke="#b41a1a" stroke-width="1.8"/><path d="M1.2 13.8 L4.5 10.5" stroke="#8a1010" stroke-width="2.6" stroke-linecap="round"/></svg>
<div style="position:absolute;left:1109px;top:467px;width:16px;height:15px;background:#f0f0f0"></div>
<div style="position:absolute;left:1112px;top:474px;width:2px;height:2px;background:#000"></div>
<div style="position:absolute;left:1116px;top:474px;width:2px;height:2px;background:#000"></div>
<div style="position:absolute;left:1120px;top:474px;width:2px;height:2px;background:#000"></div>
<div style="position:absolute;right:410px;top:470px;font:400 11px/11px 'Liberation Sans', sans-serif;color:#111;white-space:pre;">0</div>
<div style="position:absolute;left:1181px;top:468px;font:400 11px/11px 'Liberation Sans', sans-serif;color:#111;white-space:pre;width:86px;overflow:hidden;padding:2px 0 3px 0;">С консолидации на</div>
<div style="position:absolute;left:1271px;top:467px;width:16px;height:15px;background:#f0f0f0"></div>
<div style="position:absolute;left:1275px;top:470px;font:400 11px/11px 'Liberation Sans', sans-serif;color:#111;white-space:pre;">A</div>
<div style="position:absolute;right:248px;top:470px;font:400 11px/11px 'Liberation Sans', sans-serif;color:#111;white-space:pre;">3216</div>
<div style="position:absolute;left:134px;top:487px;font:400 11px/11px 'Liberation Sans', sans-serif;color:#111;white-space:pre;width:63px;overflow:hidden;padding:2px 0 3px 0;">Создано</div>
<div style="position:absolute;left:357px;top:486px;width:16px;height:14px;background:#f0f0f0"></div>
<svg style="position:absolute;left:361px;top:491px;" width="10" height="6" viewBox="0 0 10 6"><path d="M0.5 0.5 L9.5 0.5 L5 5.5 Z" fill="#000"/></svg>
<div style="position:absolute;left:537px;top:489px;font:400 11px/11px 'Liberation Sans', sans-serif;color:#111;white-space:pre;">0</div>
<div style="position:absolute;right:955px;top:489px;font:400 11px/11px 'Liberation Sans', sans-serif;color:#111;white-space:pre;">109577</div>
<div style="position:absolute;left:636px;top:487px;font:400 11px/11px 'Liberation Sans', sans-serif;color:#111;white-space:pre;width:46px;overflow:hidden;padding:2px 0 3px 0;">15.01-1/:</div>
<div style="position:absolute;left:685px;top:489px;font:400 11px/11px 'Liberation Sans', sans-serif;color:#111;white-space:pre;">991</div>
<div style="position:absolute;right:791px;top:489px;font:400 11px/11px 'Liberation Sans', sans-serif;color:#111;white-space:pre;">1</div>
<div style="position:absolute;right:740px;top:489px;font:400 11px/11px 'Liberation Sans', sans-serif;color:#111;white-space:pre;">1</div>
<div style="position:absolute;right:641px;top:489px;font:400 11px/11px 'Liberation Sans', sans-serif;color:#111;white-space:pre;">1</div>
<div style="position:absolute;right:539px;top:489px;font:400 11px/11px 'Liberation Sans', sans-serif;color:#111;white-space:pre;">0</div>
<svg style="position:absolute;left:1052px;top:486px;" width="15" height="15" viewBox="0 0 15 15"><path d="M1.5 1.5 L13.5 13.5 M13.5 1.5 L1.5 13.5" stroke="#b41a1a" stroke-width="1.8"/><path d="M1.2 13.8 L4.5 10.5" stroke="#8a1010" stroke-width="2.6" stroke-linecap="round"/></svg>
<div style="position:absolute;left:1072.7px;top:487px;font:400 11px/11px 'Liberation Sans', sans-serif;color:#111;white-space:pre;width:35px;overflow:hidden;padding:2px 0 3px 0;">Богданов</div>
<div style="position:absolute;left:1109px;top:486px;width:16px;height:15px;background:#f0f0f0"></div>
<div style="position:absolute;left:1112px;top:493px;width:2px;height:2px;background:#000"></div>
<div style="position:absolute;left:1116px;top:493px;width:2px;height:2px;background:#000"></div>
<div style="position:absolute;left:1120px;top:493px;width:2px;height:2px;background:#000"></div>
<div style="position:absolute;right:410px;top:489px;font:400 11px/11px 'Liberation Sans', sans-serif;color:#111;white-space:pre;">0</div>
<div style="position:absolute;left:1181px;top:487px;font:400 11px/11px 'Liberation Sans', sans-serif;color:#111;white-space:pre;width:86px;overflow:hidden;padding:2px 0 3px 0;">С консолидации на</div>
<div style="position:absolute;left:1271px;top:486px;width:16px;height:15px;background:#f0f0f0"></div>
<div style="position:absolute;left:1275px;top:489px;font:400 11px/11px 'Liberation Sans', sans-serif;color:#111;white-space:pre;">A</div>
<div style="position:absolute;right:248px;top:489px;font:400 11px/11px 'Liberation Sans', sans-serif;color:#111;white-space:pre;">8362</div>
<div style="position:absolute;left:134px;top:506px;font:400 11px/11px 'Liberation Sans', sans-serif;color:#111;white-space:pre;width:63px;overflow:hidden;padding:2px 0 3px 0;">Создано</div>
<div style="position:absolute;left:357px;top:505px;width:16px;height:14px;background:#f0f0f0"></div>
<svg style="position:absolute;left:361px;top:510px;" width="10" height="6" viewBox="0 0 10 6"><path d="M0.5 0.5 L9.5 0.5 L5 5.5 Z" fill="#000"/></svg>
<div style="position:absolute;left:537px;top:508px;font:400 11px/11px 'Liberation Sans', sans-serif;color:#111;white-space:pre;">0</div>
<div style="position:absolute;right:955px;top:508px;font:400 11px/11px 'Liberation Sans', sans-serif;color:#111;white-space:pre;">109576</div>
<div style="position:absolute;left:636px;top:506px;font:400 11px/11px 'Liberation Sans', sans-serif;color:#111;white-space:pre;width:46px;overflow:hidden;padding:2px 0 3px 0;">15.01-1/:</div>
<div style="position:absolute;left:685px;top:508px;font:400 11px/11px 'Liberation Sans', sans-serif;color:#111;white-space:pre;">991</div>
<div style="position:absolute;right:791px;top:508px;font:400 11px/11px 'Liberation Sans', sans-serif;color:#111;white-space:pre;">1</div>
<div style="position:absolute;right:740px;top:508px;font:400 11px/11px 'Liberation Sans', sans-serif;color:#111;white-space:pre;">1</div>
<div style="position:absolute;right:641px;top:508px;font:400 11px/11px 'Liberation Sans', sans-serif;color:#111;white-space:pre;">1</div>
<div style="position:absolute;right:539px;top:508px;font:400 11px/11px 'Liberation Sans', sans-serif;color:#111;white-space:pre;">0</div>
<svg style="position:absolute;left:1052px;top:505px;" width="15" height="15" viewBox="0 0 15 15"><path d="M1.5 1.5 L13.5 13.5 M13.5 1.5 L1.5 13.5" stroke="#b41a1a" stroke-width="1.8"/><path d="M1.2 13.8 L4.5 10.5" stroke="#8a1010" stroke-width="2.6" stroke-linecap="round"/></svg>
<div style="position:absolute;left:1109px;top:505px;width:16px;height:15px;background:#f0f0f0"></div>
<div style="position:absolute;left:1112px;top:512px;width:2px;height:2px;background:#000"></div>
<div style="position:absolute;left:1116px;top:512px;width:2px;height:2px;background:#000"></div>
<div style="position:absolute;left:1120px;top:512px;width:2px;height:2px;background:#000"></div>
<div style="position:absolute;right:410px;top:508px;font:400 11px/11px 'Liberation Sans', sans-serif;color:#111;white-space:pre;">0</div>
<div style="position:absolute;left:1181px;top:506px;font:400 11px/11px 'Liberation Sans', sans-serif;color:#111;white-space:pre;width:86px;overflow:hidden;padding:2px 0 3px 0;">С консолидации на</div>
<div style="position:absolute;left:1271px;top:505px;width:16px;height:15px;background:#f0f0f0"></div>
<div style="position:absolute;left:1275px;top:508px;font:400 11px/11px 'Liberation Sans', sans-serif;color:#111;white-space:pre;">A</div>
<div style="position:absolute;right:248px;top:508px;font:400 11px/11px 'Liberation Sans', sans-serif;color:#111;white-space:pre;">3216</div>
<div style="position:absolute;left:134px;top:525px;font:400 11px/11px 'Liberation Sans', sans-serif;color:#111;white-space:pre;width:63px;overflow:hidden;padding:2px 0 3px 0;">Создано</div>
<div style="position:absolute;left:357px;top:524px;width:16px;height:14px;background:#f0f0f0"></div>
<svg style="position:absolute;left:361px;top:529px;" width="10" height="6" viewBox="0 0 10 6"><path d="M0.5 0.5 L9.5 0.5 L5 5.5 Z" fill="#000"/></svg>
<div style="position:absolute;left:537px;top:527px;font:400 11px/11px 'Liberation Sans', sans-serif;color:#111;white-space:pre;">0</div>
<div style="position:absolute;right:955px;top:527px;font:400 11px/11px 'Liberation Sans', sans-serif;color:#111;white-space:pre;">109581</div>
<div style="position:absolute;left:636px;top:525px;font:400 11px/11px 'Liberation Sans', sans-serif;color:#111;white-space:pre;width:46px;overflow:hidden;padding:2px 0 3px 0;">15.01-1/:</div>
<div style="position:absolute;left:685px;top:527px;font:400 11px/11px 'Liberation Sans', sans-serif;color:#111;white-space:pre;">991</div>
<div style="position:absolute;right:791px;top:527px;font:400 11px/11px 'Liberation Sans', sans-serif;color:#111;white-space:pre;">1</div>
<div style="position:absolute;right:740px;top:527px;font:400 11px/11px 'Liberation Sans', sans-serif;color:#111;white-space:pre;">1</div>
<div style="position:absolute;right:641px;top:527px;font:400 11px/11px 'Liberation Sans', sans-serif;color:#111;white-space:pre;">1</div>
<div style="position:absolute;right:539px;top:527px;font:400 11px/11px 'Liberation Sans', sans-serif;color:#111;white-space:pre;">0</div>
<svg style="position:absolute;left:1052px;top:524px;" width="15" height="15" viewBox="0 0 15 15"><path d="M1.5 1.5 L13.5 13.5 M13.5 1.5 L1.5 13.5" stroke="#b41a1a" stroke-width="1.8"/><path d="M1.2 13.8 L4.5 10.5" stroke="#8a1010" stroke-width="2.6" stroke-linecap="round"/></svg>
<div style="position:absolute;left:1109px;top:524px;width:16px;height:15px;background:#f0f0f0"></div>
<div style="position:absolute;left:1112px;top:531px;width:2px;height:2px;background:#000"></div>
<div style="position:absolute;left:1116px;top:531px;width:2px;height:2px;background:#000"></div>
<div style="position:absolute;left:1120px;top:531px;width:2px;height:2px;background:#000"></div>
<div style="position:absolute;right:410px;top:527px;font:400 11px/11px 'Liberation Sans', sans-serif;color:#111;white-space:pre;">0</div>
<div style="position:absolute;left:1181px;top:525px;font:400 11px/11px 'Liberation Sans', sans-serif;color:#111;white-space:pre;width:86px;overflow:hidden;padding:2px 0 3px 0;">С консолидации на</div>
<div style="position:absolute;left:1271px;top:524px;width:16px;height:15px;background:#f0f0f0"></div>
<div style="position:absolute;left:1275px;top:527px;font:400 11px/11px 'Liberation Sans', sans-serif;color:#111;white-space:pre;">A</div>
<div style="position:absolute;right:248px;top:527px;font:400 11px/11px 'Liberation Sans', sans-serif;color:#111;white-space:pre;">3216</div>
<div style="position:absolute;left:134px;top:544px;font:400 11px/11px 'Liberation Sans', sans-serif;color:#111;white-space:pre;width:63px;overflow:hidden;padding:2px 0 3px 0;">Создано</div>
<div style="position:absolute;left:357px;top:543px;width:16px;height:14px;background:#f0f0f0"></div>
<svg style="position:absolute;left:361px;top:548px;" width="10" height="6" viewBox="0 0 10 6"><path d="M0.5 0.5 L9.5 0.5 L5 5.5 Z" fill="#000"/></svg>
<div style="position:absolute;left:537px;top:546px;font:400 11px/11px 'Liberation Sans', sans-serif;color:#111;white-space:pre;">0</div>
<div style="position:absolute;right:955px;top:546px;font:400 11px/11px 'Liberation Sans', sans-serif;color:#111;white-space:pre;">109574</div>
<div style="position:absolute;left:636px;top:544px;font:400 11px/11px 'Liberation Sans', sans-serif;color:#111;white-space:pre;width:46px;overflow:hidden;padding:2px 0 3px 0;">15.01-1/:</div>
<div style="position:absolute;left:685px;top:546px;font:400 11px/11px 'Liberation Sans', sans-serif;color:#111;white-space:pre;">991</div>
<div style="position:absolute;right:791px;top:546px;font:400 11px/11px 'Liberation Sans', sans-serif;color:#111;white-space:pre;">1</div>
<div style="position:absolute;right:740px;top:546px;font:400 11px/11px 'Liberation Sans', sans-serif;color:#111;white-space:pre;">1</div>
<div style="position:absolute;right:641px;top:546px;font:400 11px/11px 'Liberation Sans', sans-serif;color:#111;white-space:pre;">1</div>
<div style="position:absolute;right:539px;top:546px;font:400 11px/11px 'Liberation Sans', sans-serif;color:#111;white-space:pre;">0</div>
<svg style="position:absolute;left:1052px;top:543px;" width="15" height="15" viewBox="0 0 15 15"><path d="M1.5 1.5 L13.5 13.5 M13.5 1.5 L1.5 13.5" stroke="#b41a1a" stroke-width="1.8"/><path d="M1.2 13.8 L4.5 10.5" stroke="#8a1010" stroke-width="2.6" stroke-linecap="round"/></svg>
<div style="position:absolute;left:1109px;top:543px;width:16px;height:15px;background:#f0f0f0"></div>
<div style="position:absolute;left:1112px;top:550px;width:2px;height:2px;background:#000"></div>
<div style="position:absolute;left:1116px;top:550px;width:2px;height:2px;background:#000"></div>
<div style="position:absolute;left:1120px;top:550px;width:2px;height:2px;background:#000"></div>
<div style="position:absolute;right:410px;top:546px;font:400 11px/11px 'Liberation Sans', sans-serif;color:#111;white-space:pre;">0</div>
<div style="position:absolute;left:1181px;top:544px;font:400 11px/11px 'Liberation Sans', sans-serif;color:#111;white-space:pre;width:86px;overflow:hidden;padding:2px 0 3px 0;">С консолидации на</div>
<div style="position:absolute;left:1271px;top:543px;width:16px;height:15px;background:#f0f0f0"></div>
<div style="position:absolute;left:1275px;top:546px;font:400 11px/11px 'Liberation Sans', sans-serif;color:#111;white-space:pre;">A</div>
<div style="position:absolute;right:248px;top:546px;font:400 11px/11px 'Liberation Sans', sans-serif;color:#111;white-space:pre;">3216</div>
<div style="position:absolute;left:95px;top:449px;font:400 11px/11px 'Liberation Sans', sans-serif;color:#111;white-space:pre;width:17px;overflow:hidden;padding:2px 0 3px 0;">nor</div>
<div style="position:absolute;left:114px;top:449px;font:400 11px/11px 'Liberation Sans', sans-serif;color:#d6f4ff;white-space:pre;width:17px;overflow:hidden;padding:2px 0 3px 0;">nor</div>
<div style="position:absolute;left:200px;top:451px;font:400 11px/11px 'Liberation Sans', sans-serif;color:#d6f4ff;white-space:pre;letter-spacing:-0.404px;">1234321</div>
<div style="position:absolute;left:317px;top:449px;font:400 11px/11px 'Liberation Sans', sans-serif;color:#d6f4ff;white-space:pre;width:17px;overflow:hidden;padding:2px 0 3px 0;">номенклатура</div>
<div style="position:absolute;left:337px;top:449px;font:400 11px/11px 'Liberation Sans', sans-serif;color:#d6f4ff;white-space:pre;width:17px;overflow:hidden;padding:2px 0 3px 0;">Кон</div>
<div style="position:absolute;left:377px;top:449px;font:400 11px/11px 'Liberation Sans', sans-serif;color:#d6f4ff;white-space:pre;width:17px;overflow:hidden;padding:2px 0 3px 0;">0,6</div>
<div style="position:absolute;left:397px;top:451px;font:400 11px/11px 'Liberation Sans', sans-serif;color:#d6f4ff;white-space:pre;">2</div>
<div style="position:absolute;left:80px;top:659px;width:1264px;height:1px;background:#a0a0a0"></div>
<div style="position:absolute;left:81px;top:660px;width:1262px;height:24px;background:#f0f0f0"></div>
<div style="position:absolute;left:92px;top:660px;width:1px;height:24px;background:#a0a0a0"></div>
<div style="position:absolute;left:378px;top:662px;width:16px;height:19px;border:1px solid #b4b4b4;box-sizing:border-box;background:#ececec"></div>
<div style="position:absolute;left:381px;top:668px;font:400 10px/10px 'Liberation Sans', sans-serif;color:#111;white-space:pre;">0,</div>
<div style="position:absolute;left:754px;top:662px;width:43px;height:19px;border:1px solid #b4b4b4;box-sizing:border-box;background:#ececec"></div>
<div style="position:absolute;right:793px;top:668px;font:400 10px/10px 'Liberation Sans', sans-serif;color:#111;white-space:pre;">11</div>
<div style="position:absolute;left:801px;top:662px;width:47px;height:19px;border:1px solid #b4b4b4;box-sizing:border-box;background:#ececec"></div>
<div style="position:absolute;right:742px;top:668px;font:400 10px/10px 'Liberation Sans', sans-serif;color:#111;white-space:pre;">5</div>
<div style="position:absolute;left:852px;top:662px;width:45px;height:19px;border:1px solid #b4b4b4;box-sizing:border-box;background:#ececec"></div>
<div style="position:absolute;right:693px;top:668px;font:400 10px/10px 'Liberation Sans', sans-serif;color:#111;white-space:pre;">6</div>
<div style="position:absolute;left:80px;top:409px;width:1px;height:292px;background:#a0a0a0"></div>
<div style="position:absolute;left:81px;top:684px;width:1262px;height:17px;background:#f7f7f7;border-top:1px solid #c4c4c4;border-bottom:1px solid #c4c4c4;box-sizing:border-box"></div>
<div style="position:absolute;left:81px;top:684px;width:17px;height:17px;border:1px solid #000;box-sizing:border-box;background:#f0f0f0"></div>
<svg style="position:absolute;left:86px;top:688px;" width="7" height="10" viewBox="0 0 7 10"><path d="M6 0.5 L6 9.5 L0.5 5 Z" fill="#000"/></svg>
<div style="position:absolute;left:97px;top:684px;width:502px;height:17px;border:1px solid #000;border-width:2px 1px 2px 1px;box-sizing:border-box;background:#f0f0f0"></div>
<div style="position:absolute;left:1325px;top:684px;width:18px;height:17px;border:1px solid #000;box-sizing:border-box;background:#f0f0f0"></div>
<svg style="position:absolute;left:1331px;top:688px;" width="7" height="10" viewBox="0 0 7 10"><path d="M1 0.5 L1 9.5 L6.5 5 Z" fill="#000"/></svg>
<div style="position:absolute;left:0px;top:704px;width:1344px;height:1px;background:#b0b0b0"></div>
<div style="position:absolute;left:0px;top:705px;width:1344px;height:17px;background:#f0f0f0"></div>
<div style="position:absolute;left:48px;top:706px;width:1px;height:16px;background:#c8c8c8"></div>
<div style="position:absolute;left:52px;top:706px;width:1px;height:16px;background:#c8c8c8"></div>
<div style="position:absolute;left:0px;top:721px;width:1344px;height:1px;background:#707070"></div>
<svg style="position:absolute;left:1332px;top:709px;" width="11" height="11" viewBox="0 0 11 11"><path d="M10 2 L2 10 M10 6 L6 10" stroke="#b0b0b0" stroke-width="1"/></svg>
<div style="position:absolute;left:1360.2px;top:325px;font:700 17px/17px 'Liberation Sans', sans-serif;color:#d8262c;white-space:pre;letter-spacing:-0.256px;">1. Назначаем контрагента</div>
<div style="position:absolute;left:1360.2px;top:348px;font:700 17px/17px 'Liberation Sans', sans-serif;color:#d8262c;white-space:pre;letter-spacing:-0.126px;">2. Переходим в раздел</div>
<div style="position:absolute;left:1360.2px;top:371px;font:700 17px/17px 'Liberation Sans', sans-serif;color:#d8262c;white-space:pre;letter-spacing:-0.368px;">задания</div>
<div style="position:absolute;left:1360.2px;top:393.5px;font:700 17px/17px 'Liberation Sans', sans-serif;color:#d8262c;white-space:pre;letter-spacing:-0.112px;">3. выбираем доп. поле</div>
</body></html>
